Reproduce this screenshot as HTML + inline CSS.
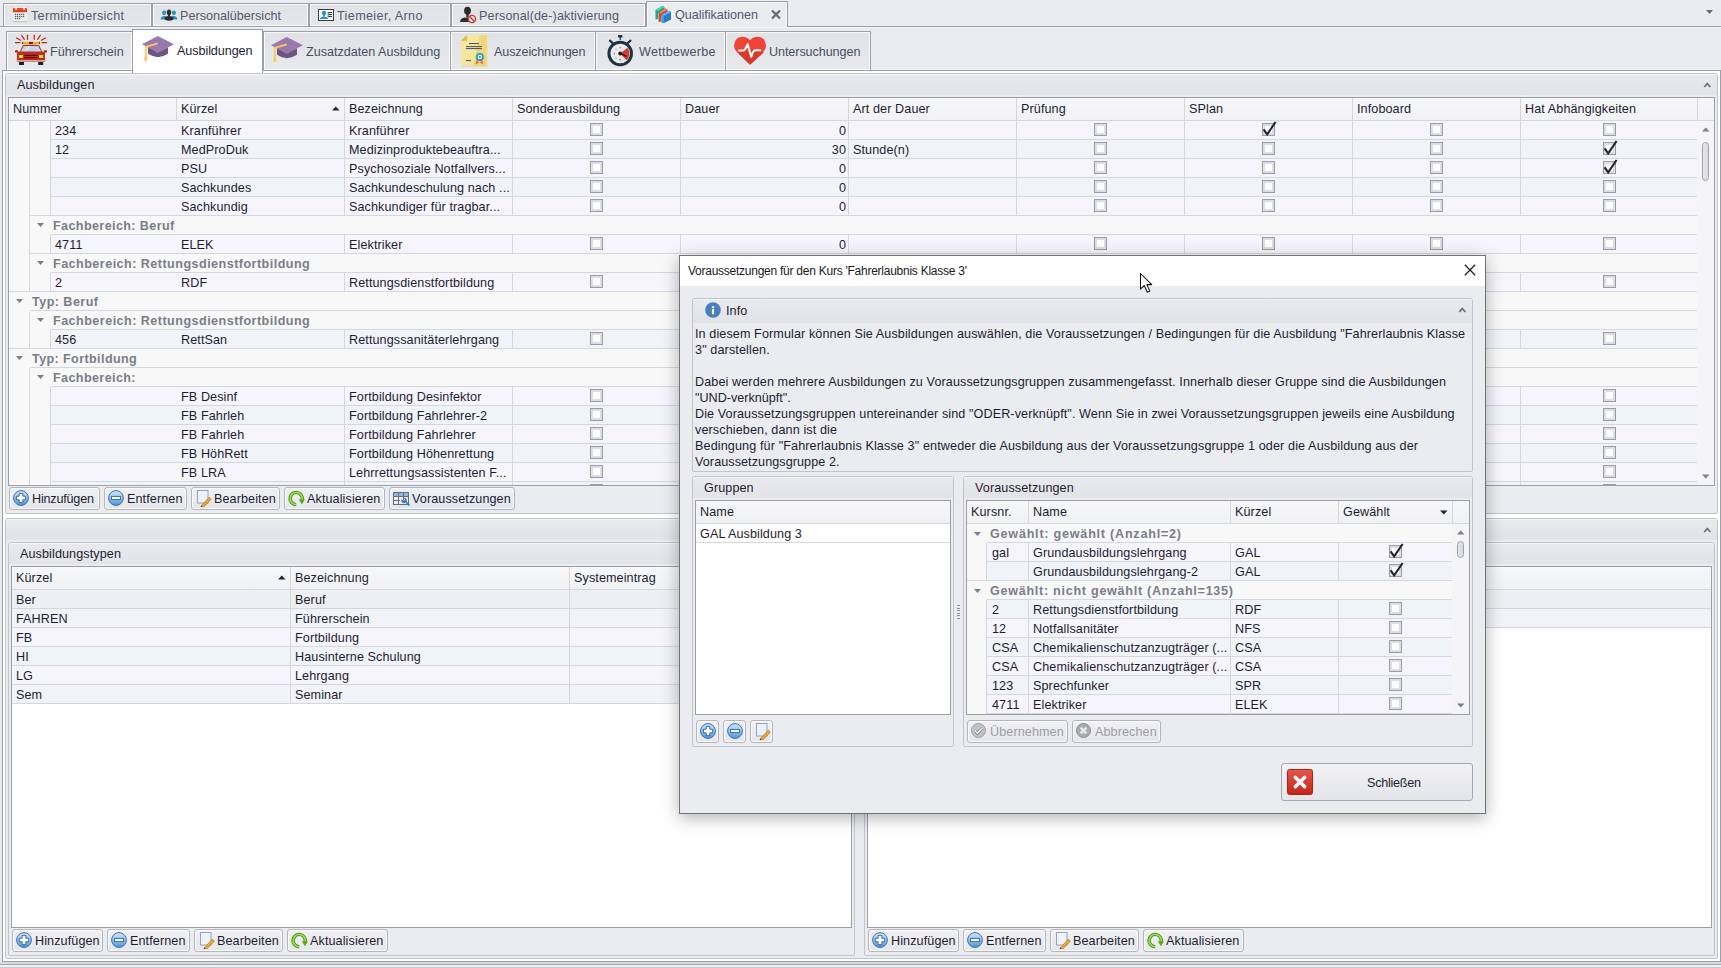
<!DOCTYPE html>
<html><head><meta charset="utf-8"><style>
html,body{margin:0;padding:0;width:1721px;height:968px;overflow:hidden;background:#ebecef;}
body{font-family:"Liberation Sans",sans-serif;position:relative;}
body>div{position:absolute;}
.t{position:absolute;white-space:nowrap;line-height:1;font-family:"Liberation Sans",sans-serif;}
</style></head><body>
<div style="left:0px;top:26px;width:1721px;height:1px;background:#9c9ea9"></div>
<div style="left:0px;top:27px;width:1721px;height:1px;background:#f5f5f7"></div>
<div style="left:3px;top:3px;width:149px;height:24px;background:linear-gradient(#e1e2e6,#e6e7eb);border:1px solid #9c9ea9;box-sizing:border-box;box-shadow:inset 0 0 0 1px rgba(255,255,255,0.85)"></div>
<div style="left:152px;top:3px;width:157px;height:24px;background:linear-gradient(#e1e2e6,#e6e7eb);border:1px solid #9c9ea9;box-sizing:border-box;box-shadow:inset 0 0 0 1px rgba(255,255,255,0.85)"></div>
<div style="left:309px;top:3px;width:142px;height:24px;background:linear-gradient(#e1e2e6,#e6e7eb);border:1px solid #9c9ea9;box-sizing:border-box;box-shadow:inset 0 0 0 1px rgba(255,255,255,0.85)"></div>
<div style="left:451px;top:3px;width:195px;height:24px;background:linear-gradient(#e1e2e6,#e6e7eb);border:1px solid #9c9ea9;box-sizing:border-box;box-shadow:inset 0 0 0 1px rgba(255,255,255,0.85)"></div>
<div style="left:646px;top:1px;width:142px;height:26px;background:#ebecef;border:1px solid #9c9ea9;border-bottom:none;box-sizing:border-box;box-shadow:inset 1px 1px 0 #f7f7f9,inset -1px 0 0 #f7f7f9"></div>
<div class="t" style="left:31px;top:10px;font-size:12.6px;color:#56576f;letter-spacing:0.294px;">Terminübersicht</div>
<div class="t" style="left:180px;top:10px;font-size:12.6px;color:#56576f;letter-spacing:0.012px;">Personalübersicht</div>
<div class="t" style="left:337px;top:10px;font-size:12.6px;color:#56576f;letter-spacing:0.367px;">Tiemeier, Arno</div>
<div class="t" style="left:479px;top:10px;font-size:12.6px;color:#56576f;letter-spacing:0.122px;">Personal(de-)aktivierung</div>
<div class="t" style="left:675px;top:9px;font-size:12.6px;color:#56576f;letter-spacing:-0.022px;">Qualifikationen</div>
<svg style="position:absolute;left:13px;top:7px;" width="14" height="16" viewBox="0 0 14 16"><defs><linearGradient id="cal" x1="0" y1="0" x2="0" y2="1"><stop offset="0" stop-color="#ff4a1c"/><stop offset="1" stop-color="#d8391a"/></linearGradient></defs><rect x="0" y="5" width="14" height="9.5" fill="#efefef"/><rect x="0" y="14" width="14" height="1.2" fill="#c6c6c6"/><rect x="0" y="1" width="14" height="4.2" rx="0.6" fill="url(#cal)"/><rect x="2.3" y="0" width="1.7" height="2.8" fill="#fff"/><rect x="10.2" y="0" width="1.7" height="2.8" fill="#fff"/><rect x="1.9" y="6.80" width="1.3" height="1.3" fill="#5f5f5f"/><rect x="1.9" y="8.85" width="1.3" height="1.3" fill="#5f5f5f"/><rect x="1.9" y="10.90" width="1.3" height="1.3" fill="#5f5f5f"/><rect x="3.9" y="6.80" width="1.3" height="1.3" fill="#5f5f5f"/><rect x="3.9" y="8.85" width="1.3" height="1.3" fill="#5f5f5f"/><rect x="3.9" y="10.90" width="1.3" height="1.3" fill="#5f5f5f"/><rect x="5.9" y="6.80" width="1.3" height="1.3" fill="#5f5f5f"/><rect x="5.9" y="8.85" width="1.3" height="1.3" fill="#5f5f5f"/><rect x="5.9" y="10.90" width="1.3" height="1.3" fill="#5f5f5f"/><rect x="7.9" y="6.80" width="1.3" height="1.3" fill="#5f5f5f"/><rect x="7.9" y="8.85" width="1.3" height="1.3" fill="#5f5f5f"/><rect x="9.9" y="6.80" width="1.3" height="1.3" fill="#5f5f5f"/><rect x="9.9" y="8.85" width="1.3" height="1.3" fill="#5f5f5f"/></svg>
<svg style="position:absolute;left:160px;top:9px;" width="18" height="12" viewBox="0 0 18 12"><ellipse cx="4.1" cy="3.8" rx="2" ry="2.4" fill="#2a92c0"/><path d="M0.6 10.5 Q0.8 7 4.3 7 L6 7.6 V10.5Z" fill="#2a92c0"/><ellipse cx="13.9" cy="3.8" rx="2" ry="2.4" fill="#2a92c0"/><path d="M17.4 10.5 Q17.2 7 13.7 7 L12 7.6 V10.5Z" fill="#2a92c0"/><ellipse cx="9" cy="3.4" rx="2.2" ry="2.8" fill="#2d2d2d"/><rect x="8" y="5.5" width="2" height="2" fill="#2d2d2d"/><ellipse cx="9" cy="9.3" rx="4.5" ry="2.4" fill="#2d2d2d"/></svg>
<svg style="position:absolute;left:318px;top:9px;" width="16" height="12" viewBox="0 0 16 12"><rect x="0.5" y="0.5" width="15" height="11" fill="#fbfbfb" stroke="#3a3a3a" stroke-width="1"/><ellipse cx="6" cy="4.1" rx="2.1" ry="2.3" fill="#2a92c0"/><rect x="5.2" y="6" width="1.6" height="1.5" fill="#2a92c0"/><path d="M1.8 10 Q2.2 7.4 6 7.4 Q9.8 7.4 10.2 10Z" fill="#2a92c0"/><rect x="9.8" y="3" width="4.2" height="1.1" fill="#3a3a3a"/><rect x="9.8" y="5" width="4.2" height="1.1" fill="#3a3a3a"/><rect x="9.8" y="7" width="4.2" height="1.1" fill="#3a3a3a"/><rect x="9.8" y="3" width="0.9" height="5.1" fill="#2a92c0"/></svg>
<svg style="position:absolute;left:459px;top:6px;" width="18" height="18" viewBox="0 0 18 18"><ellipse cx="8.5" cy="4.7" rx="3.4" ry="3.9" fill="#2d2d2d"/><rect x="7.3" y="8" width="2.4" height="3" fill="#2d2d2d"/><path d="M1 16 Q1.2 12 6 11.5 H11 L12 16Z" fill="#2d2d2d"/><circle cx="13" cy="13" r="3.6" fill="#e4eef6" stroke="#d23a2a" stroke-width="1.4"/><path d="M10.6 10.6 L15.4 15.4" stroke="#d23a2a" stroke-width="1.4"/></svg>
<svg style="position:absolute;left:655px;top:5px;" width="17" height="18" viewBox="0 0 17 18"><path d="M0.5 5 L7 1 L9.5 2 V4.5 L3 8.5 V14 L0.5 14.5Z" fill="#15ad88"/><path d="M0.5 5 L7 1 L9.5 2 L3 6Z" fill="#4ed3b0"/><path d="M3.5 7.5 L10 3.5 L12.5 4.5 V7 L6 11 V16.5 L3.5 17Z" fill="#e5412e"/><path d="M3.5 7.5 L10 3.5 L12.5 4.5 L6 8.5Z" fill="#f07a66"/><path d="M6.5 10 L13.5 6 L16 7 V14.5 L9 18 L6.5 17.5Z" fill="#2a7cc0"/><path d="M6.5 10 L13.5 6 L16 7 L9 11Z" fill="#5bb6f5"/><path d="M6.5 10 L9 11 V18 L6.5 17.5Z" fill="#36a3ee"/></svg>
<svg style="position:absolute;left:770px;top:9px;" width="12" height="11" viewBox="0 0 12 11"><path d="M2 1.5 L10 9.5 M10 1.5 L2 9.5" stroke="#6b6c78" stroke-width="2.4"/></svg>
<svg style="position:absolute;left:1706px;top:10px;" width="8" height="5" viewBox="0 0 8 5"><path d="M0 0 H7 L3.5 4Z" fill="#6b6c78"/></svg>
<div style="left:6px;top:31px;width:127px;height:40px;background:linear-gradient(#e1e2e6,#e8e9ed);border:1px solid #9c9ea9;box-sizing:border-box;box-shadow:inset 0 0 0 1px rgba(255,255,255,0.8)"></div>
<div style="left:263px;top:31px;width:188px;height:40px;background:linear-gradient(#e1e2e6,#e8e9ed);border:1px solid #9c9ea9;box-sizing:border-box;box-shadow:inset 0 0 0 1px rgba(255,255,255,0.8)"></div>
<div style="left:450px;top:31px;width:146px;height:40px;background:linear-gradient(#e1e2e6,#e8e9ed);border:1px solid #9c9ea9;box-sizing:border-box;box-shadow:inset 0 0 0 1px rgba(255,255,255,0.8)"></div>
<div style="left:595px;top:31px;width:131px;height:40px;background:linear-gradient(#e1e2e6,#e8e9ed);border:1px solid #9c9ea9;box-sizing:border-box;box-shadow:inset 0 0 0 1px rgba(255,255,255,0.8)"></div>
<div style="left:725px;top:31px;width:146px;height:40px;background:linear-gradient(#e1e2e6,#e8e9ed);border:1px solid #9c9ea9;box-sizing:border-box;box-shadow:inset 0 0 0 1px rgba(255,255,255,0.8)"></div>
<div style="left:2px;top:70px;width:1719px;height:892px;border:1px solid #9c9ea9;box-sizing:border-box;background:#fff"></div>
<div style="left:132px;top:29px;width:131px;height:44px;background:#fff;border:1px solid #9c9ea9;border-bottom:none;box-sizing:border-box;"></div>
<div class="t" style="left:50px;top:46px;font-size:12.6px;color:#4b4c64;letter-spacing:0.018px;">Führerschein</div>
<div class="t" style="left:177px;top:45px;font-size:12.6px;color:#1e1d33;letter-spacing:-0.075px;">Ausbildungen</div>
<div class="t" style="left:306px;top:46px;font-size:12.6px;color:#4b4c64;letter-spacing:-0.009px;">Zusatzdaten Ausbildung</div>
<div class="t" style="left:494px;top:46px;font-size:12.6px;color:#4b4c64;letter-spacing:-0.125px;">Auszeichnungen</div>
<div class="t" style="left:639px;top:46px;font-size:12.6px;color:#4b4c64;letter-spacing:0.262px;">Wettbewerbe</div>
<div class="t" style="left:769px;top:46px;font-size:12.6px;color:#4b4c64;letter-spacing:-0.079px;">Untersuchungen</div>
<svg style="position:absolute;left:141px;top:35px;" width="34" height="27" viewBox="0 0 34 27"><path d="M1 9.2 L16.8 1 L33 9.2 L16.8 17.6Z" fill="#9a7aae"/><path d="M7 12.3 V18.8 Q16.8 25.5 27 18.8 V12.3 L16.8 17.6Z" fill="#6d5582"/><path d="M16.8 8.3 L4.8 11.8 V23.5" stroke="#fcc85b" stroke-width="1.9" fill="none" stroke-linejoin="round"/><rect x="3.3" y="21.5" width="3" height="4.5" rx="1.2" fill="#fcc85b"/></svg>
<svg style="position:absolute;left:270px;top:36px;" width="34" height="27" viewBox="0 0 34 27"><path d="M1 9.2 L16.8 1 L33 9.2 L16.8 17.6Z" fill="#9a7aae"/><path d="M7 12.3 V18.8 Q16.8 25.5 27 18.8 V12.3 L16.8 17.6Z" fill="#6d5582"/><path d="M16.8 8.3 L4.8 11.8 V23.5" stroke="#fcc85b" stroke-width="1.9" fill="none" stroke-linejoin="round"/><rect x="3.3" y="21.5" width="3" height="4.5" rx="1.2" fill="#fcc85b"/></svg>
<svg style="position:absolute;left:12px;top:32px;" width="38" height="36" viewBox="0 0 38 36"><g stroke="#b8281a" stroke-width="1.2" stroke-linecap="round"><path d="M15.5 3.3 V7.3"/><path d="M22.3 3.3 V7.3"/><path d="M9.7 3.3 L12.3 7.3"/><path d="M28.3 3.3 L25.7 7.3"/><path d="M4.6 6 L8.6 8.2"/><path d="M33.4 6 L29.4 8.2"/><path d="M3.4 10.6 H8"/><path d="M34.6 10.6 H30"/></g><rect x="10" y="9.9" width="18" height="2.1" fill="#e3b60c"/><rect x="17.1" y="9.9" width="3.8" height="2.1" fill="#8c0c08"/><rect x="10" y="9.9" width="0.9" height="2.1" fill="#8c0c08"/><rect x="27.1" y="9.9" width="0.9" height="2.1" fill="#8c0c08"/><path d="M7.5 20.5 L10.6 13.8 Q11.2 12.7 12.8 12.7 H25.2 Q26.8 12.7 27.4 13.8 L30.5 20.5Z" fill="#b72a12"/><path d="M8.6 19.9 L11.6 13.9 H26.4 L29.4 19.9Z" fill="#c4d4ee"/><path d="M12 19.9 L16.5 13.9 H18 L13.5 19.9Z" fill="#e2ecfa"/><path d="M5 21 Q5.5 19.5 8 19.5 H30 Q32.5 19.5 33 21 V29.7 H5Z" fill="#bf2d12"/><rect x="3" y="18.2" width="3.2" height="2.4" rx="0.8" fill="#a8200e"/><rect x="31.8" y="18.2" width="3.2" height="2.4" rx="0.8" fill="#a8200e"/><rect x="6.9" y="23" width="4.1" height="3" fill="#ffd21f"/><rect x="27" y="23" width="4.1" height="3" fill="#ffd21f"/><rect x="7.8" y="23.8" width="2" height="1.2" fill="#fff6b0"/><rect x="27.9" y="23.8" width="2" height="1.2" fill="#fff6b0"/><rect x="12.2" y="22.9" width="13.6" height="1.1" fill="#4e0804"/><rect x="12.2" y="25.1" width="13.6" height="1.1" fill="#4e0804"/><rect x="4.2" y="28.2" width="29.6" height="1.2" fill="#c9ccd2"/><rect x="7" y="30" width="5" height="3" fill="#222"/><rect x="26.2" y="30" width="5" height="3" fill="#222"/></svg>
<svg style="position:absolute;left:461px;top:35px;" width="28" height="32" viewBox="0 0 28 32"><path d="M0 5.7 L5.8 0 H26.2 V30.8 H0Z" fill="#f5e89c"/><path d="M19 0 H26.2 V30.8 H12 Z" fill="#f0d878"/><path d="M0 5.7 L5.8 0 V5.7Z" fill="#e3b440"/><rect x="1" y="30.8" width="25.6" height="0.8" fill="#c8c0a0" opacity="0.6"/><rect x="8" y="8" width="10" height="1.1" fill="#4a5a78"/><rect x="5" y="11" width="16" height="1.1" fill="#4a5a78"/><rect x="5" y="13" width="16" height="1.1" fill="#4a5a78"/><rect x="5" y="25" width="5" height="1.1" fill="#4a5a78"/><path d="M16.7 24.5 L15.6 28 L17.6 27.3 M20.3 24.5 L21.4 28 L19.4 27.3" stroke="#f07030" stroke-width="1.5" fill="none"/><circle cx="18.9" cy="21.9" r="4" fill="#2a9bc0"/><circle cx="18.9" cy="21.9" r="2.2" fill="#fff"/><circle cx="18.9" cy="21.9" r="1.1" fill="#2a9bc0"/></svg>
<svg style="position:absolute;left:606px;top:34px;" width="28" height="33" viewBox="0 0 28 33"><rect x="12" y="1" width="4.4" height="2.6" rx="0.5" fill="#1f3346"/><rect x="13.6" y="3" width="1.2" height="3" fill="#1f3346"/><path d="M4 6.6 L6.8 9.3 M24.4 6.6 L21.6 9.3" stroke="#1f3346" stroke-width="2.2" stroke-linecap="round"/><circle cx="14.2" cy="19.5" r="11.3" fill="#e9edef" stroke="#1f3346" stroke-width="3"/><path d="M14.2 19.5 L13.2 28.5 A9 9 0 0 0 22 15Z" fill="#dfe3e6" opacity="0.8"/><path d="M14.2 19.5 L21.5 13.8 A9.3 9.3 0 0 1 20.5 26.3Z" fill="#d9392a"/><rect x="13.5" y="13" width="1.4" height="1.4" fill="#ee6a5a"/><rect x="7.6" y="19" width="1.4" height="1.4" fill="#ee6a5a"/><rect x="13.5" y="25" width="1.4" height="1.4" fill="#d96050"/><rect x="9.4" y="14.6" width="1.3" height="1.3" fill="#8fa6c4"/><rect x="9.4" y="23.4" width="1.3" height="1.3" fill="#8fa6c4"/><path d="M14.2 19.5 L20.5 22.3" stroke="#1a1a1a" stroke-width="1.3"/><circle cx="14.2" cy="19.5" r="1.9" fill="#1a1a1a"/></svg>
<svg style="position:absolute;left:733px;top:36px;" width="34" height="30" viewBox="0 0 34 30"><defs><linearGradient id="hg" x1="0" y1="0" x2="1" y2="1"><stop offset="0.5" stop-color="#ef4338"/><stop offset="0.5" stop-color="#d5372c"/></linearGradient></defs><path d="M17 28.8 L3.8 16 Q0.5 12.5 1.2 8.5 Q2.2 1 9.5 0.8 Q14.2 0.8 17 4.3 Q19.8 0.8 24.5 0.8 Q31.8 1 32.8 8.5 Q33.5 12.5 30.2 16Z" fill="#ef4338"/><path d="M17 28.8 L6 18 L12.5 12 L17 18.5 L19.5 13.5 L31 16.5Z" fill="#d5372c" opacity="0.85"/><path d="M6 14.5 H10.2 Q11.6 14.5 12.8 12 L14.7 8.2 L18.2 20.8 L20 16 Q21 14.3 23 14.3 H27.3" stroke="#fff" stroke-width="2" fill="none" stroke-linejoin="round" stroke-linecap="round"/></svg>
<div style="left:5px;top:73px;width:1713px;height:441px;border:1px solid #c3c4cb;border-radius:3px 3px 2px 2px;box-sizing:border-box;background:#ebecef"></div>
<div style="left:6px;top:74px;width:1711px;height:21px;background:linear-gradient(#e9eaee,#e2e3e7);border-radius:2px 2px 0 0;box-shadow:inset 0 1px 0 rgba(255,255,255,0.55)"></div>
<div class="t" style="left:17px;top:79px;font-size:12.6px;color:#1e1d33;letter-spacing:0.1px;">Ausbildungen</div>
<svg style="position:absolute;left:1703px;top:82px;" width="9" height="6" viewBox="0 0 9 6"><path d="M1.2 5 L4.3 1.6 L7.4 5" stroke="#6f707c" stroke-width="1.7" fill="none"/></svg>
<div style="left:8px;top:97px;width:1707px;height:389px;border:1px solid #9c9ea9;box-sizing:border-box;background:#fff"></div>
<div style="left:9px;top:98px;width:1705px;height:22px;background:linear-gradient(#f7f7f9,#f1f2f4)"></div>
<div style="left:9px;top:120px;width:1705px;height:1px;background:#d6d7dc"></div>
<div style="left:176px;top:98px;width:1px;height:22px;background:#d6d7dc"></div>
<div style="left:344px;top:98px;width:1px;height:22px;background:#d6d7dc"></div>
<div style="left:512px;top:98px;width:1px;height:22px;background:#d6d7dc"></div>
<div style="left:680px;top:98px;width:1px;height:22px;background:#d6d7dc"></div>
<div style="left:848px;top:98px;width:1px;height:22px;background:#d6d7dc"></div>
<div style="left:1016px;top:98px;width:1px;height:22px;background:#d6d7dc"></div>
<div style="left:1184px;top:98px;width:1px;height:22px;background:#d6d7dc"></div>
<div style="left:1352px;top:98px;width:1px;height:22px;background:#d6d7dc"></div>
<div style="left:1520px;top:98px;width:1px;height:22px;background:#d6d7dc"></div>
<div style="left:1697px;top:98px;width:1px;height:22px;background:#d6d7dc"></div>
<div class="t" style="left:13px;top:103px;font-size:12.6px;color:#1e1d33;letter-spacing:0.1px;">Nummer</div>
<div class="t" style="left:181px;top:103px;font-size:12.6px;color:#1e1d33;letter-spacing:0.1px;">Kürzel</div>
<div class="t" style="left:349px;top:103px;font-size:12.6px;color:#1e1d33;letter-spacing:0.1px;">Bezeichnung</div>
<div class="t" style="left:517px;top:103px;font-size:12.6px;color:#1e1d33;letter-spacing:0.1px;">Sonderausbildung</div>
<div class="t" style="left:685px;top:103px;font-size:12.6px;color:#1e1d33;letter-spacing:0.1px;">Dauer</div>
<div class="t" style="left:853px;top:103px;font-size:12.6px;color:#1e1d33;letter-spacing:0.1px;">Art der Dauer</div>
<div class="t" style="left:1021px;top:103px;font-size:12.6px;color:#1e1d33;letter-spacing:0.1px;">Prüfung</div>
<div class="t" style="left:1189px;top:103px;font-size:12.6px;color:#1e1d33;letter-spacing:0.1px;">SPlan</div>
<div class="t" style="left:1357px;top:103px;font-size:12.6px;color:#1e1d33;letter-spacing:0.1px;">Infoboard</div>
<div class="t" style="left:1525px;top:103px;font-size:12.6px;color:#1e1d33;letter-spacing:0.1px;">Hat Abhängigkeiten</div>
<svg style="position:absolute;left:332px;top:106px;" width="8" height="5" viewBox="0 0 8 5"><path d="M0 4.5 L3.75 0.5 L7.5 4.5Z" fill="#22223a"/></svg>
<div style="left:1697px;top:121px;width:17px;height:364px;background:#f5f5f7"></div>
<svg style="position:absolute;left:1702px;top:127px;" width="8" height="5" viewBox="0 0 8 5"><path d="M0 4.5 L3.75 0.5 L7.5 4.5Z" fill="#7d7e8a"/></svg>
<div style="left:1702px;top:142px;width:7px;height:39px;border:1px solid #9fa0ab;border-radius:4px;box-sizing:border-box;background:linear-gradient(90deg,#e6e7ec,#d8d9df)"></div>
<svg style="position:absolute;left:1702px;top:474px;" width="8" height="5" viewBox="0 0 8 5"><path d="M0 0.5 H7.5 L3.75 4.5Z" fill="#7d7e8a"/></svg>
<div style="left:9px;top:121px;width:42px;height:364px;background:#f8f8f9"></div>
<div style="left:51px;top:121px;width:1646px;height:18px;background:#f6f4fc"></div>
<div style="left:344px;top:121px;width:1px;height:18px;background:#d6d7dc"></div>
<div style="left:512px;top:121px;width:1px;height:18px;background:#d6d7dc"></div>
<div style="left:680px;top:121px;width:1px;height:18px;background:#d6d7dc"></div>
<div style="left:848px;top:121px;width:1px;height:18px;background:#d6d7dc"></div>
<div style="left:1016px;top:121px;width:1px;height:18px;background:#d6d7dc"></div>
<div style="left:1184px;top:121px;width:1px;height:18px;background:#d6d7dc"></div>
<div style="left:1352px;top:121px;width:1px;height:18px;background:#d6d7dc"></div>
<div style="left:1520px;top:121px;width:1px;height:18px;background:#d6d7dc"></div>
<div class="t" style="left:55px;top:125px;font-size:12.6px;color:#1e1d33;letter-spacing:0.1px;">234</div>
<div class="t" style="left:181px;top:125px;font-size:12.6px;color:#1e1d33;letter-spacing:0.1px;">Kranführer</div>
<div class="t" style="left:349px;top:125px;font-size:12.6px;color:#1e1d33;letter-spacing:0.1px;">Kranführer</div>
<div style="left:590px;top:123px;width:13px;height:13px;border:1px solid #9b9ca7;box-sizing:border-box;background:#fff;box-shadow:inset 0 0 0 2px #dddee3"></div>
<div class="t" style="right:875px;top:125px;font-size:12.6px;color:#1e1d33;letter-spacing:0.1px;">0</div>
<div style="left:1094px;top:123px;width:13px;height:13px;border:1px solid #9b9ca7;box-sizing:border-box;background:#fff;box-shadow:inset 0 0 0 2px #dddee3"></div>
<div style="left:1262px;top:123px;width:13px;height:13px;border:1px solid #9b9ca7;box-sizing:border-box;background:#fff;box-shadow:inset 0 0 0 2px #dddee3"></div>
<svg style="position:absolute;left:1262px;top:121px;" width="15" height="15" viewBox="0 0 15 15"><path d="M1.6 8.3 L5.2 13.3 L13.6 1" stroke="#23223a" stroke-width="2.1" fill="none"/></svg>
<div style="left:1430px;top:123px;width:13px;height:13px;border:1px solid #9b9ca7;box-sizing:border-box;background:#fff;box-shadow:inset 0 0 0 2px #dddee3"></div>
<div style="left:1603px;top:123px;width:13px;height:13px;border:1px solid #9b9ca7;box-sizing:border-box;background:#fff;box-shadow:inset 0 0 0 2px #dddee3"></div>
<div style="left:51px;top:139px;width:1646px;height:1px;background:#d6d7dc"></div>
<div style="left:51px;top:140px;width:1646px;height:18px;background:#f0f3f8"></div>
<div style="left:344px;top:140px;width:1px;height:18px;background:#d6d7dc"></div>
<div style="left:512px;top:140px;width:1px;height:18px;background:#d6d7dc"></div>
<div style="left:680px;top:140px;width:1px;height:18px;background:#d6d7dc"></div>
<div style="left:848px;top:140px;width:1px;height:18px;background:#d6d7dc"></div>
<div style="left:1016px;top:140px;width:1px;height:18px;background:#d6d7dc"></div>
<div style="left:1184px;top:140px;width:1px;height:18px;background:#d6d7dc"></div>
<div style="left:1352px;top:140px;width:1px;height:18px;background:#d6d7dc"></div>
<div style="left:1520px;top:140px;width:1px;height:18px;background:#d6d7dc"></div>
<div class="t" style="left:55px;top:144px;font-size:12.6px;color:#1e1d33;letter-spacing:0.1px;">12</div>
<div class="t" style="left:181px;top:144px;font-size:12.6px;color:#1e1d33;letter-spacing:0.1px;">MedProDuk</div>
<div class="t" style="left:349px;top:144px;font-size:12.6px;color:#1e1d33;letter-spacing:0.1px;">Medizinproduktebeauftra...</div>
<div style="left:590px;top:142px;width:13px;height:13px;border:1px solid #9b9ca7;box-sizing:border-box;background:#fff;box-shadow:inset 0 0 0 2px #dddee3"></div>
<div class="t" style="right:875px;top:144px;font-size:12.6px;color:#1e1d33;letter-spacing:0.1px;">30</div>
<div class="t" style="left:853px;top:144px;font-size:12.6px;color:#1e1d33;letter-spacing:0.1px;">Stunde(n)</div>
<div style="left:1094px;top:142px;width:13px;height:13px;border:1px solid #9b9ca7;box-sizing:border-box;background:#fff;box-shadow:inset 0 0 0 2px #dddee3"></div>
<div style="left:1262px;top:142px;width:13px;height:13px;border:1px solid #9b9ca7;box-sizing:border-box;background:#fff;box-shadow:inset 0 0 0 2px #dddee3"></div>
<div style="left:1430px;top:142px;width:13px;height:13px;border:1px solid #9b9ca7;box-sizing:border-box;background:#fff;box-shadow:inset 0 0 0 2px #dddee3"></div>
<div style="left:1603px;top:142px;width:13px;height:13px;border:1px solid #9b9ca7;box-sizing:border-box;background:#fff;box-shadow:inset 0 0 0 2px #dddee3"></div>
<svg style="position:absolute;left:1603px;top:140px;" width="15" height="15" viewBox="0 0 15 15"><path d="M1.6 8.3 L5.2 13.3 L13.6 1" stroke="#23223a" stroke-width="2.1" fill="none"/></svg>
<div style="left:51px;top:158px;width:1646px;height:1px;background:#d6d7dc"></div>
<div style="left:51px;top:159px;width:1646px;height:18px;background:#f6f4fc"></div>
<div style="left:344px;top:159px;width:1px;height:18px;background:#d6d7dc"></div>
<div style="left:512px;top:159px;width:1px;height:18px;background:#d6d7dc"></div>
<div style="left:680px;top:159px;width:1px;height:18px;background:#d6d7dc"></div>
<div style="left:848px;top:159px;width:1px;height:18px;background:#d6d7dc"></div>
<div style="left:1016px;top:159px;width:1px;height:18px;background:#d6d7dc"></div>
<div style="left:1184px;top:159px;width:1px;height:18px;background:#d6d7dc"></div>
<div style="left:1352px;top:159px;width:1px;height:18px;background:#d6d7dc"></div>
<div style="left:1520px;top:159px;width:1px;height:18px;background:#d6d7dc"></div>
<div class="t" style="left:181px;top:163px;font-size:12.6px;color:#1e1d33;letter-spacing:0.1px;">PSU</div>
<div class="t" style="left:349px;top:163px;font-size:12.6px;color:#1e1d33;letter-spacing:0.1px;">Psychosoziale Notfallvers...</div>
<div style="left:590px;top:161px;width:13px;height:13px;border:1px solid #9b9ca7;box-sizing:border-box;background:#fff;box-shadow:inset 0 0 0 2px #dddee3"></div>
<div class="t" style="right:875px;top:163px;font-size:12.6px;color:#1e1d33;letter-spacing:0.1px;">0</div>
<div style="left:1094px;top:161px;width:13px;height:13px;border:1px solid #9b9ca7;box-sizing:border-box;background:#fff;box-shadow:inset 0 0 0 2px #dddee3"></div>
<div style="left:1262px;top:161px;width:13px;height:13px;border:1px solid #9b9ca7;box-sizing:border-box;background:#fff;box-shadow:inset 0 0 0 2px #dddee3"></div>
<div style="left:1430px;top:161px;width:13px;height:13px;border:1px solid #9b9ca7;box-sizing:border-box;background:#fff;box-shadow:inset 0 0 0 2px #dddee3"></div>
<div style="left:1603px;top:161px;width:13px;height:13px;border:1px solid #9b9ca7;box-sizing:border-box;background:#fff;box-shadow:inset 0 0 0 2px #dddee3"></div>
<svg style="position:absolute;left:1603px;top:159px;" width="15" height="15" viewBox="0 0 15 15"><path d="M1.6 8.3 L5.2 13.3 L13.6 1" stroke="#23223a" stroke-width="2.1" fill="none"/></svg>
<div style="left:51px;top:177px;width:1646px;height:1px;background:#d6d7dc"></div>
<div style="left:51px;top:178px;width:1646px;height:18px;background:#f0f3f8"></div>
<div style="left:344px;top:178px;width:1px;height:18px;background:#d6d7dc"></div>
<div style="left:512px;top:178px;width:1px;height:18px;background:#d6d7dc"></div>
<div style="left:680px;top:178px;width:1px;height:18px;background:#d6d7dc"></div>
<div style="left:848px;top:178px;width:1px;height:18px;background:#d6d7dc"></div>
<div style="left:1016px;top:178px;width:1px;height:18px;background:#d6d7dc"></div>
<div style="left:1184px;top:178px;width:1px;height:18px;background:#d6d7dc"></div>
<div style="left:1352px;top:178px;width:1px;height:18px;background:#d6d7dc"></div>
<div style="left:1520px;top:178px;width:1px;height:18px;background:#d6d7dc"></div>
<div class="t" style="left:181px;top:182px;font-size:12.6px;color:#1e1d33;letter-spacing:0.1px;">Sachkundes</div>
<div class="t" style="left:349px;top:182px;font-size:12.6px;color:#1e1d33;letter-spacing:0.1px;">Sachkundeschulung nach ...</div>
<div style="left:590px;top:180px;width:13px;height:13px;border:1px solid #9b9ca7;box-sizing:border-box;background:#fff;box-shadow:inset 0 0 0 2px #dddee3"></div>
<div class="t" style="right:875px;top:182px;font-size:12.6px;color:#1e1d33;letter-spacing:0.1px;">0</div>
<div style="left:1094px;top:180px;width:13px;height:13px;border:1px solid #9b9ca7;box-sizing:border-box;background:#fff;box-shadow:inset 0 0 0 2px #dddee3"></div>
<div style="left:1262px;top:180px;width:13px;height:13px;border:1px solid #9b9ca7;box-sizing:border-box;background:#fff;box-shadow:inset 0 0 0 2px #dddee3"></div>
<div style="left:1430px;top:180px;width:13px;height:13px;border:1px solid #9b9ca7;box-sizing:border-box;background:#fff;box-shadow:inset 0 0 0 2px #dddee3"></div>
<div style="left:1603px;top:180px;width:13px;height:13px;border:1px solid #9b9ca7;box-sizing:border-box;background:#fff;box-shadow:inset 0 0 0 2px #dddee3"></div>
<div style="left:51px;top:196px;width:1646px;height:1px;background:#d6d7dc"></div>
<div style="left:51px;top:197px;width:1646px;height:18px;background:#f6f4fc"></div>
<div style="left:344px;top:197px;width:1px;height:18px;background:#d6d7dc"></div>
<div style="left:512px;top:197px;width:1px;height:18px;background:#d6d7dc"></div>
<div style="left:680px;top:197px;width:1px;height:18px;background:#d6d7dc"></div>
<div style="left:848px;top:197px;width:1px;height:18px;background:#d6d7dc"></div>
<div style="left:1016px;top:197px;width:1px;height:18px;background:#d6d7dc"></div>
<div style="left:1184px;top:197px;width:1px;height:18px;background:#d6d7dc"></div>
<div style="left:1352px;top:197px;width:1px;height:18px;background:#d6d7dc"></div>
<div style="left:1520px;top:197px;width:1px;height:18px;background:#d6d7dc"></div>
<div class="t" style="left:181px;top:201px;font-size:12.6px;color:#1e1d33;letter-spacing:0.1px;">Sachkundig</div>
<div class="t" style="left:349px;top:201px;font-size:12.6px;color:#1e1d33;letter-spacing:0.1px;">Sachkundiger für tragbar...</div>
<div style="left:590px;top:199px;width:13px;height:13px;border:1px solid #9b9ca7;box-sizing:border-box;background:#fff;box-shadow:inset 0 0 0 2px #dddee3"></div>
<div class="t" style="right:875px;top:201px;font-size:12.6px;color:#1e1d33;letter-spacing:0.1px;">0</div>
<div style="left:1094px;top:199px;width:13px;height:13px;border:1px solid #9b9ca7;box-sizing:border-box;background:#fff;box-shadow:inset 0 0 0 2px #dddee3"></div>
<div style="left:1262px;top:199px;width:13px;height:13px;border:1px solid #9b9ca7;box-sizing:border-box;background:#fff;box-shadow:inset 0 0 0 2px #dddee3"></div>
<div style="left:1430px;top:199px;width:13px;height:13px;border:1px solid #9b9ca7;box-sizing:border-box;background:#fff;box-shadow:inset 0 0 0 2px #dddee3"></div>
<div style="left:1603px;top:199px;width:13px;height:13px;border:1px solid #9b9ca7;box-sizing:border-box;background:#fff;box-shadow:inset 0 0 0 2px #dddee3"></div>
<div style="left:30px;top:215px;width:1667px;height:1px;background:#d6d7dc"></div>
<div style="left:30px;top:216px;width:1667px;height:18px;background:#f8f8f9"></div>
<svg style="position:absolute;left:37px;top:223px;" width="7" height="4" viewBox="0 0 7 4"><path d="M0 0 H7 L3.5 4Z" fill="#7c7d88"/></svg>
<div class="t" style="left:53px;top:220px;font-size:12.6px;color:#7c7d88;font-weight:bold;letter-spacing:0.38px;">Fachbereich: Beruf</div>
<div style="left:51px;top:234px;width:1646px;height:1px;background:#d6d7dc"></div>
<div style="left:51px;top:235px;width:1646px;height:18px;background:#f6f4fc"></div>
<div style="left:344px;top:235px;width:1px;height:18px;background:#d6d7dc"></div>
<div style="left:512px;top:235px;width:1px;height:18px;background:#d6d7dc"></div>
<div style="left:680px;top:235px;width:1px;height:18px;background:#d6d7dc"></div>
<div style="left:848px;top:235px;width:1px;height:18px;background:#d6d7dc"></div>
<div style="left:1016px;top:235px;width:1px;height:18px;background:#d6d7dc"></div>
<div style="left:1184px;top:235px;width:1px;height:18px;background:#d6d7dc"></div>
<div style="left:1352px;top:235px;width:1px;height:18px;background:#d6d7dc"></div>
<div style="left:1520px;top:235px;width:1px;height:18px;background:#d6d7dc"></div>
<div class="t" style="left:55px;top:239px;font-size:12.6px;color:#1e1d33;letter-spacing:0.1px;">4711</div>
<div class="t" style="left:181px;top:239px;font-size:12.6px;color:#1e1d33;letter-spacing:0.1px;">ELEK</div>
<div class="t" style="left:349px;top:239px;font-size:12.6px;color:#1e1d33;letter-spacing:0.1px;">Elektriker</div>
<div style="left:590px;top:237px;width:13px;height:13px;border:1px solid #9b9ca7;box-sizing:border-box;background:#fff;box-shadow:inset 0 0 0 2px #dddee3"></div>
<div class="t" style="right:875px;top:239px;font-size:12.6px;color:#1e1d33;letter-spacing:0.1px;">0</div>
<div style="left:1094px;top:237px;width:13px;height:13px;border:1px solid #9b9ca7;box-sizing:border-box;background:#fff;box-shadow:inset 0 0 0 2px #dddee3"></div>
<div style="left:1262px;top:237px;width:13px;height:13px;border:1px solid #9b9ca7;box-sizing:border-box;background:#fff;box-shadow:inset 0 0 0 2px #dddee3"></div>
<div style="left:1430px;top:237px;width:13px;height:13px;border:1px solid #9b9ca7;box-sizing:border-box;background:#fff;box-shadow:inset 0 0 0 2px #dddee3"></div>
<div style="left:1603px;top:237px;width:13px;height:13px;border:1px solid #9b9ca7;box-sizing:border-box;background:#fff;box-shadow:inset 0 0 0 2px #dddee3"></div>
<div style="left:30px;top:253px;width:1667px;height:1px;background:#d6d7dc"></div>
<div style="left:30px;top:254px;width:1667px;height:18px;background:#f8f8f9"></div>
<svg style="position:absolute;left:37px;top:261px;" width="7" height="4" viewBox="0 0 7 4"><path d="M0 0 H7 L3.5 4Z" fill="#7c7d88"/></svg>
<div class="t" style="left:53px;top:258px;font-size:12.6px;color:#7c7d88;font-weight:bold;letter-spacing:0.454px;">Fachbereich: Rettungsdienstfortbildung</div>
<div style="left:51px;top:272px;width:1646px;height:1px;background:#d6d7dc"></div>
<div style="left:51px;top:273px;width:1646px;height:18px;background:#f6f4fc"></div>
<div style="left:344px;top:273px;width:1px;height:18px;background:#d6d7dc"></div>
<div style="left:512px;top:273px;width:1px;height:18px;background:#d6d7dc"></div>
<div style="left:680px;top:273px;width:1px;height:18px;background:#d6d7dc"></div>
<div style="left:848px;top:273px;width:1px;height:18px;background:#d6d7dc"></div>
<div style="left:1016px;top:273px;width:1px;height:18px;background:#d6d7dc"></div>
<div style="left:1184px;top:273px;width:1px;height:18px;background:#d6d7dc"></div>
<div style="left:1352px;top:273px;width:1px;height:18px;background:#d6d7dc"></div>
<div style="left:1520px;top:273px;width:1px;height:18px;background:#d6d7dc"></div>
<div class="t" style="left:55px;top:277px;font-size:12.6px;color:#1e1d33;letter-spacing:0.1px;">2</div>
<div class="t" style="left:181px;top:277px;font-size:12.6px;color:#1e1d33;letter-spacing:0.1px;">RDF</div>
<div class="t" style="left:349px;top:277px;font-size:12.6px;color:#1e1d33;letter-spacing:0.1px;">Rettungsdienstfortbildung</div>
<div style="left:590px;top:275px;width:13px;height:13px;border:1px solid #9b9ca7;box-sizing:border-box;background:#fff;box-shadow:inset 0 0 0 2px #dddee3"></div>
<div style="left:1094px;top:275px;width:13px;height:13px;border:1px solid #9b9ca7;box-sizing:border-box;background:#fff;box-shadow:inset 0 0 0 2px #dddee3"></div>
<div style="left:1262px;top:275px;width:13px;height:13px;border:1px solid #9b9ca7;box-sizing:border-box;background:#fff;box-shadow:inset 0 0 0 2px #dddee3"></div>
<div style="left:1430px;top:275px;width:13px;height:13px;border:1px solid #9b9ca7;box-sizing:border-box;background:#fff;box-shadow:inset 0 0 0 2px #dddee3"></div>
<div style="left:1603px;top:275px;width:13px;height:13px;border:1px solid #9b9ca7;box-sizing:border-box;background:#fff;box-shadow:inset 0 0 0 2px #dddee3"></div>
<div style="left:9px;top:291px;width:1688px;height:1px;background:#d6d7dc"></div>
<div style="left:9px;top:292px;width:1688px;height:18px;background:#f8f8f9"></div>
<svg style="position:absolute;left:16px;top:299px;" width="7" height="4" viewBox="0 0 7 4"><path d="M0 0 H7 L3.5 4Z" fill="#7c7d88"/></svg>
<div class="t" style="left:32px;top:296px;font-size:12.6px;color:#7c7d88;font-weight:bold;letter-spacing:0.439px;">Typ: Beruf</div>
<div style="left:30px;top:310px;width:1667px;height:1px;background:#d6d7dc"></div>
<div style="left:30px;top:311px;width:1667px;height:18px;background:#f8f8f9"></div>
<svg style="position:absolute;left:37px;top:318px;" width="7" height="4" viewBox="0 0 7 4"><path d="M0 0 H7 L3.5 4Z" fill="#7c7d88"/></svg>
<div class="t" style="left:53px;top:315px;font-size:12.6px;color:#7c7d88;font-weight:bold;letter-spacing:0.454px;">Fachbereich: Rettungsdienstfortbildung</div>
<div style="left:51px;top:329px;width:1646px;height:1px;background:#d6d7dc"></div>
<div style="left:51px;top:330px;width:1646px;height:18px;background:#f0f3f8"></div>
<div style="left:344px;top:330px;width:1px;height:18px;background:#d6d7dc"></div>
<div style="left:512px;top:330px;width:1px;height:18px;background:#d6d7dc"></div>
<div style="left:680px;top:330px;width:1px;height:18px;background:#d6d7dc"></div>
<div style="left:848px;top:330px;width:1px;height:18px;background:#d6d7dc"></div>
<div style="left:1016px;top:330px;width:1px;height:18px;background:#d6d7dc"></div>
<div style="left:1184px;top:330px;width:1px;height:18px;background:#d6d7dc"></div>
<div style="left:1352px;top:330px;width:1px;height:18px;background:#d6d7dc"></div>
<div style="left:1520px;top:330px;width:1px;height:18px;background:#d6d7dc"></div>
<div class="t" style="left:55px;top:334px;font-size:12.6px;color:#1e1d33;letter-spacing:0.1px;">456</div>
<div class="t" style="left:181px;top:334px;font-size:12.6px;color:#1e1d33;letter-spacing:0.1px;">RettSan</div>
<div class="t" style="left:349px;top:334px;font-size:12.6px;color:#1e1d33;letter-spacing:0.1px;">Rettungssanitäterlehrgang</div>
<div style="left:590px;top:332px;width:13px;height:13px;border:1px solid #9b9ca7;box-sizing:border-box;background:#fff;box-shadow:inset 0 0 0 2px #dddee3"></div>
<div style="left:1094px;top:332px;width:13px;height:13px;border:1px solid #9b9ca7;box-sizing:border-box;background:#fff;box-shadow:inset 0 0 0 2px #dddee3"></div>
<div style="left:1262px;top:332px;width:13px;height:13px;border:1px solid #9b9ca7;box-sizing:border-box;background:#fff;box-shadow:inset 0 0 0 2px #dddee3"></div>
<div style="left:1430px;top:332px;width:13px;height:13px;border:1px solid #9b9ca7;box-sizing:border-box;background:#fff;box-shadow:inset 0 0 0 2px #dddee3"></div>
<div style="left:1603px;top:332px;width:13px;height:13px;border:1px solid #9b9ca7;box-sizing:border-box;background:#fff;box-shadow:inset 0 0 0 2px #dddee3"></div>
<div style="left:9px;top:348px;width:1688px;height:1px;background:#d6d7dc"></div>
<div style="left:9px;top:349px;width:1688px;height:18px;background:#f8f8f9"></div>
<svg style="position:absolute;left:16px;top:356px;" width="7" height="4" viewBox="0 0 7 4"><path d="M0 0 H7 L3.5 4Z" fill="#7c7d88"/></svg>
<div class="t" style="left:32px;top:353px;font-size:12.6px;color:#7c7d88;font-weight:bold;letter-spacing:0.38px;">Typ: Fortbildung</div>
<div style="left:30px;top:367px;width:1667px;height:1px;background:#d6d7dc"></div>
<div style="left:30px;top:368px;width:1667px;height:18px;background:#f8f8f9"></div>
<svg style="position:absolute;left:37px;top:375px;" width="7" height="4" viewBox="0 0 7 4"><path d="M0 0 H7 L3.5 4Z" fill="#7c7d88"/></svg>
<div class="t" style="left:53px;top:372px;font-size:12.6px;color:#7c7d88;font-weight:bold;letter-spacing:0.38px;">Fachbereich:</div>
<div style="left:51px;top:386px;width:1646px;height:1px;background:#d6d7dc"></div>
<div style="left:51px;top:387px;width:1646px;height:18px;background:#f6f4fc"></div>
<div style="left:344px;top:387px;width:1px;height:18px;background:#d6d7dc"></div>
<div style="left:512px;top:387px;width:1px;height:18px;background:#d6d7dc"></div>
<div style="left:680px;top:387px;width:1px;height:18px;background:#d6d7dc"></div>
<div style="left:848px;top:387px;width:1px;height:18px;background:#d6d7dc"></div>
<div style="left:1016px;top:387px;width:1px;height:18px;background:#d6d7dc"></div>
<div style="left:1184px;top:387px;width:1px;height:18px;background:#d6d7dc"></div>
<div style="left:1352px;top:387px;width:1px;height:18px;background:#d6d7dc"></div>
<div style="left:1520px;top:387px;width:1px;height:18px;background:#d6d7dc"></div>
<div class="t" style="left:181px;top:391px;font-size:12.6px;color:#1e1d33;letter-spacing:0.1px;">FB Desinf</div>
<div class="t" style="left:349px;top:391px;font-size:12.6px;color:#1e1d33;letter-spacing:0.1px;">Fortbildung Desinfektor</div>
<div style="left:590px;top:389px;width:13px;height:13px;border:1px solid #9b9ca7;box-sizing:border-box;background:#fff;box-shadow:inset 0 0 0 2px #dddee3"></div>
<div style="left:1094px;top:389px;width:13px;height:13px;border:1px solid #9b9ca7;box-sizing:border-box;background:#fff;box-shadow:inset 0 0 0 2px #dddee3"></div>
<div style="left:1262px;top:389px;width:13px;height:13px;border:1px solid #9b9ca7;box-sizing:border-box;background:#fff;box-shadow:inset 0 0 0 2px #dddee3"></div>
<div style="left:1430px;top:389px;width:13px;height:13px;border:1px solid #9b9ca7;box-sizing:border-box;background:#fff;box-shadow:inset 0 0 0 2px #dddee3"></div>
<div style="left:1603px;top:389px;width:13px;height:13px;border:1px solid #9b9ca7;box-sizing:border-box;background:#fff;box-shadow:inset 0 0 0 2px #dddee3"></div>
<div style="left:51px;top:405px;width:1646px;height:1px;background:#d6d7dc"></div>
<div style="left:51px;top:406px;width:1646px;height:18px;background:#f0f3f8"></div>
<div style="left:344px;top:406px;width:1px;height:18px;background:#d6d7dc"></div>
<div style="left:512px;top:406px;width:1px;height:18px;background:#d6d7dc"></div>
<div style="left:680px;top:406px;width:1px;height:18px;background:#d6d7dc"></div>
<div style="left:848px;top:406px;width:1px;height:18px;background:#d6d7dc"></div>
<div style="left:1016px;top:406px;width:1px;height:18px;background:#d6d7dc"></div>
<div style="left:1184px;top:406px;width:1px;height:18px;background:#d6d7dc"></div>
<div style="left:1352px;top:406px;width:1px;height:18px;background:#d6d7dc"></div>
<div style="left:1520px;top:406px;width:1px;height:18px;background:#d6d7dc"></div>
<div class="t" style="left:181px;top:410px;font-size:12.6px;color:#1e1d33;letter-spacing:0.1px;">FB Fahrleh</div>
<div class="t" style="left:349px;top:410px;font-size:12.6px;color:#1e1d33;letter-spacing:0.1px;">Fortbildung Fahrlehrer-2</div>
<div style="left:590px;top:408px;width:13px;height:13px;border:1px solid #9b9ca7;box-sizing:border-box;background:#fff;box-shadow:inset 0 0 0 2px #dddee3"></div>
<div style="left:1094px;top:408px;width:13px;height:13px;border:1px solid #9b9ca7;box-sizing:border-box;background:#fff;box-shadow:inset 0 0 0 2px #dddee3"></div>
<div style="left:1262px;top:408px;width:13px;height:13px;border:1px solid #9b9ca7;box-sizing:border-box;background:#fff;box-shadow:inset 0 0 0 2px #dddee3"></div>
<div style="left:1430px;top:408px;width:13px;height:13px;border:1px solid #9b9ca7;box-sizing:border-box;background:#fff;box-shadow:inset 0 0 0 2px #dddee3"></div>
<div style="left:1603px;top:408px;width:13px;height:13px;border:1px solid #9b9ca7;box-sizing:border-box;background:#fff;box-shadow:inset 0 0 0 2px #dddee3"></div>
<div style="left:51px;top:424px;width:1646px;height:1px;background:#d6d7dc"></div>
<div style="left:51px;top:425px;width:1646px;height:18px;background:#f6f4fc"></div>
<div style="left:344px;top:425px;width:1px;height:18px;background:#d6d7dc"></div>
<div style="left:512px;top:425px;width:1px;height:18px;background:#d6d7dc"></div>
<div style="left:680px;top:425px;width:1px;height:18px;background:#d6d7dc"></div>
<div style="left:848px;top:425px;width:1px;height:18px;background:#d6d7dc"></div>
<div style="left:1016px;top:425px;width:1px;height:18px;background:#d6d7dc"></div>
<div style="left:1184px;top:425px;width:1px;height:18px;background:#d6d7dc"></div>
<div style="left:1352px;top:425px;width:1px;height:18px;background:#d6d7dc"></div>
<div style="left:1520px;top:425px;width:1px;height:18px;background:#d6d7dc"></div>
<div class="t" style="left:181px;top:429px;font-size:12.6px;color:#1e1d33;letter-spacing:0.1px;">FB Fahrleh</div>
<div class="t" style="left:349px;top:429px;font-size:12.6px;color:#1e1d33;letter-spacing:0.1px;">Fortbildung Fahrlehrer</div>
<div style="left:590px;top:427px;width:13px;height:13px;border:1px solid #9b9ca7;box-sizing:border-box;background:#fff;box-shadow:inset 0 0 0 2px #dddee3"></div>
<div style="left:1094px;top:427px;width:13px;height:13px;border:1px solid #9b9ca7;box-sizing:border-box;background:#fff;box-shadow:inset 0 0 0 2px #dddee3"></div>
<div style="left:1262px;top:427px;width:13px;height:13px;border:1px solid #9b9ca7;box-sizing:border-box;background:#fff;box-shadow:inset 0 0 0 2px #dddee3"></div>
<div style="left:1430px;top:427px;width:13px;height:13px;border:1px solid #9b9ca7;box-sizing:border-box;background:#fff;box-shadow:inset 0 0 0 2px #dddee3"></div>
<div style="left:1603px;top:427px;width:13px;height:13px;border:1px solid #9b9ca7;box-sizing:border-box;background:#fff;box-shadow:inset 0 0 0 2px #dddee3"></div>
<div style="left:51px;top:443px;width:1646px;height:1px;background:#d6d7dc"></div>
<div style="left:51px;top:444px;width:1646px;height:18px;background:#f0f3f8"></div>
<div style="left:344px;top:444px;width:1px;height:18px;background:#d6d7dc"></div>
<div style="left:512px;top:444px;width:1px;height:18px;background:#d6d7dc"></div>
<div style="left:680px;top:444px;width:1px;height:18px;background:#d6d7dc"></div>
<div style="left:848px;top:444px;width:1px;height:18px;background:#d6d7dc"></div>
<div style="left:1016px;top:444px;width:1px;height:18px;background:#d6d7dc"></div>
<div style="left:1184px;top:444px;width:1px;height:18px;background:#d6d7dc"></div>
<div style="left:1352px;top:444px;width:1px;height:18px;background:#d6d7dc"></div>
<div style="left:1520px;top:444px;width:1px;height:18px;background:#d6d7dc"></div>
<div class="t" style="left:181px;top:448px;font-size:12.6px;color:#1e1d33;letter-spacing:0.1px;">FB HöhRett</div>
<div class="t" style="left:349px;top:448px;font-size:12.6px;color:#1e1d33;letter-spacing:0.1px;">Fortbildung Höhenrettung</div>
<div style="left:590px;top:446px;width:13px;height:13px;border:1px solid #9b9ca7;box-sizing:border-box;background:#fff;box-shadow:inset 0 0 0 2px #dddee3"></div>
<div style="left:1094px;top:446px;width:13px;height:13px;border:1px solid #9b9ca7;box-sizing:border-box;background:#fff;box-shadow:inset 0 0 0 2px #dddee3"></div>
<div style="left:1262px;top:446px;width:13px;height:13px;border:1px solid #9b9ca7;box-sizing:border-box;background:#fff;box-shadow:inset 0 0 0 2px #dddee3"></div>
<div style="left:1430px;top:446px;width:13px;height:13px;border:1px solid #9b9ca7;box-sizing:border-box;background:#fff;box-shadow:inset 0 0 0 2px #dddee3"></div>
<div style="left:1603px;top:446px;width:13px;height:13px;border:1px solid #9b9ca7;box-sizing:border-box;background:#fff;box-shadow:inset 0 0 0 2px #dddee3"></div>
<div style="left:51px;top:462px;width:1646px;height:1px;background:#d6d7dc"></div>
<div style="left:51px;top:463px;width:1646px;height:18px;background:#f6f4fc"></div>
<div style="left:344px;top:463px;width:1px;height:18px;background:#d6d7dc"></div>
<div style="left:512px;top:463px;width:1px;height:18px;background:#d6d7dc"></div>
<div style="left:680px;top:463px;width:1px;height:18px;background:#d6d7dc"></div>
<div style="left:848px;top:463px;width:1px;height:18px;background:#d6d7dc"></div>
<div style="left:1016px;top:463px;width:1px;height:18px;background:#d6d7dc"></div>
<div style="left:1184px;top:463px;width:1px;height:18px;background:#d6d7dc"></div>
<div style="left:1352px;top:463px;width:1px;height:18px;background:#d6d7dc"></div>
<div style="left:1520px;top:463px;width:1px;height:18px;background:#d6d7dc"></div>
<div class="t" style="left:181px;top:467px;font-size:12.6px;color:#1e1d33;letter-spacing:0.1px;">FB LRA</div>
<div class="t" style="left:349px;top:467px;font-size:12.6px;color:#1e1d33;letter-spacing:0.1px;">Lehrrettungsassistenten F...</div>
<div style="left:590px;top:465px;width:13px;height:13px;border:1px solid #9b9ca7;box-sizing:border-box;background:#fff;box-shadow:inset 0 0 0 2px #dddee3"></div>
<div style="left:1094px;top:465px;width:13px;height:13px;border:1px solid #9b9ca7;box-sizing:border-box;background:#fff;box-shadow:inset 0 0 0 2px #dddee3"></div>
<div style="left:1262px;top:465px;width:13px;height:13px;border:1px solid #9b9ca7;box-sizing:border-box;background:#fff;box-shadow:inset 0 0 0 2px #dddee3"></div>
<div style="left:1430px;top:465px;width:13px;height:13px;border:1px solid #9b9ca7;box-sizing:border-box;background:#fff;box-shadow:inset 0 0 0 2px #dddee3"></div>
<div style="left:1603px;top:465px;width:13px;height:13px;border:1px solid #9b9ca7;box-sizing:border-box;background:#fff;box-shadow:inset 0 0 0 2px #dddee3"></div>
<div style="left:51px;top:481px;width:1646px;height:1px;background:#d6d7dc"></div>
<div style="left:51px;top:482px;width:1646px;height:3px;background:#f0f3f8"></div>
<div style="left:344px;top:482px;width:1px;height:3px;background:#d6d7dc"></div>
<div style="left:512px;top:482px;width:1px;height:3px;background:#d6d7dc"></div>
<div style="left:680px;top:482px;width:1px;height:3px;background:#d6d7dc"></div>
<div style="left:848px;top:482px;width:1px;height:3px;background:#d6d7dc"></div>
<div style="left:1016px;top:482px;width:1px;height:3px;background:#d6d7dc"></div>
<div style="left:1184px;top:482px;width:1px;height:3px;background:#d6d7dc"></div>
<div style="left:1352px;top:482px;width:1px;height:3px;background:#d6d7dc"></div>
<div style="left:1520px;top:482px;width:1px;height:3px;background:#d6d7dc"></div>
<div style="left:590px;top:484px;width:13px;height:1px;border-top:1px solid #9b9ca7;box-sizing:border-box;background:#e4e5ea"></div>
<div style="left:1094px;top:484px;width:13px;height:1px;border-top:1px solid #9b9ca7;box-sizing:border-box;background:#e4e5ea"></div>
<div style="left:1262px;top:484px;width:13px;height:1px;border-top:1px solid #9b9ca7;box-sizing:border-box;background:#e4e5ea"></div>
<div style="left:1430px;top:484px;width:13px;height:1px;border-top:1px solid #9b9ca7;box-sizing:border-box;background:#e4e5ea"></div>
<div style="left:1603px;top:484px;width:13px;height:1px;border-top:1px solid #9b9ca7;box-sizing:border-box;background:#e4e5ea"></div>
<div style="left:29px;top:121px;width:1px;height:19px;background:#d6d7dc"></div>
<div style="left:50px;top:121px;width:1px;height:19px;background:#d6d7dc"></div>
<div style="left:29px;top:140px;width:1px;height:19px;background:#d6d7dc"></div>
<div style="left:50px;top:140px;width:1px;height:19px;background:#d6d7dc"></div>
<div style="left:29px;top:159px;width:1px;height:19px;background:#d6d7dc"></div>
<div style="left:50px;top:159px;width:1px;height:19px;background:#d6d7dc"></div>
<div style="left:29px;top:178px;width:1px;height:19px;background:#d6d7dc"></div>
<div style="left:50px;top:178px;width:1px;height:19px;background:#d6d7dc"></div>
<div style="left:29px;top:197px;width:1px;height:19px;background:#d6d7dc"></div>
<div style="left:50px;top:197px;width:1px;height:19px;background:#d6d7dc"></div>
<div style="left:29px;top:216px;width:1px;height:19px;background:#d6d7dc"></div>
<div style="left:29px;top:235px;width:1px;height:19px;background:#d6d7dc"></div>
<div style="left:50px;top:235px;width:1px;height:19px;background:#d6d7dc"></div>
<div style="left:29px;top:254px;width:1px;height:19px;background:#d6d7dc"></div>
<div style="left:29px;top:273px;width:1px;height:19px;background:#d6d7dc"></div>
<div style="left:50px;top:273px;width:1px;height:19px;background:#d6d7dc"></div>
<div style="left:29px;top:311px;width:1px;height:19px;background:#d6d7dc"></div>
<div style="left:29px;top:330px;width:1px;height:19px;background:#d6d7dc"></div>
<div style="left:50px;top:330px;width:1px;height:19px;background:#d6d7dc"></div>
<div style="left:29px;top:368px;width:1px;height:19px;background:#d6d7dc"></div>
<div style="left:29px;top:387px;width:1px;height:19px;background:#d6d7dc"></div>
<div style="left:50px;top:387px;width:1px;height:19px;background:#d6d7dc"></div>
<div style="left:29px;top:406px;width:1px;height:19px;background:#d6d7dc"></div>
<div style="left:50px;top:406px;width:1px;height:19px;background:#d6d7dc"></div>
<div style="left:29px;top:425px;width:1px;height:19px;background:#d6d7dc"></div>
<div style="left:50px;top:425px;width:1px;height:19px;background:#d6d7dc"></div>
<div style="left:29px;top:444px;width:1px;height:19px;background:#d6d7dc"></div>
<div style="left:50px;top:444px;width:1px;height:19px;background:#d6d7dc"></div>
<div style="left:29px;top:463px;width:1px;height:19px;background:#d6d7dc"></div>
<div style="left:50px;top:463px;width:1px;height:19px;background:#d6d7dc"></div>
<div style="left:29px;top:482px;width:1px;height:3px;background:#d6d7dc"></div>
<div style="left:50px;top:482px;width:1px;height:3px;background:#d6d7dc"></div>
<div style="left:9px;top:487px;width:91px;height:23px;background:linear-gradient(#f1f1f4,#e5e6ea);border:1px solid #b4b5bd;border-radius:3px;box-sizing:border-box;box-shadow:inset 0 0 0 1px rgba(255,255,255,0.75)"></div>
<svg style="position:absolute;left:13px;top:490px;" width="16" height="16" viewBox="0 0 16 16"><defs><linearGradient id="gp" x1="0" y1="0" x2="0" y2="1"><stop offset="0" stop-color="#cfe6fa"/><stop offset="0.55" stop-color="#8cc0ec"/><stop offset="1" stop-color="#4d93d6"/></linearGradient></defs><circle cx="8" cy="8" r="7.4" fill="url(#gp)" stroke="#3b6fb6" stroke-width="1"/><path d="M6.2 3.4 H9.8 V6.2 H12.6 V9.8 H9.8 V12.6 H6.2 V9.8 H3.4 V6.2 H6.2Z" fill="#fff" stroke="#2f5fa5" stroke-width="0.9"/></svg>
<div class="t" style="left:32px;top:493px;font-size:12.6px;color:#1e1d33;letter-spacing:-0.191px;">Hinzufügen</div>
<div style="left:104px;top:487px;width:83px;height:23px;background:linear-gradient(#f1f1f4,#e5e6ea);border:1px solid #b4b5bd;border-radius:3px;box-sizing:border-box;box-shadow:inset 0 0 0 1px rgba(255,255,255,0.75)"></div>
<svg style="position:absolute;left:108px;top:490px;" width="16" height="16" viewBox="0 0 16 16"><circle cx="8" cy="8" r="7.4" fill="url(#gp)" stroke="#3b6fb6" stroke-width="1"/><rect x="3.6" y="6.4" width="8.8" height="3.2" fill="#fff" stroke="#2f5fa5" stroke-width="0.9"/></svg>
<div class="t" style="left:127px;top:493px;font-size:12.6px;color:#1e1d33;letter-spacing:0.1px;">Entfernen</div>
<div style="left:191px;top:487px;width:89px;height:23px;background:linear-gradient(#f1f1f4,#e5e6ea);border:1px solid #b4b5bd;border-radius:3px;box-sizing:border-box;box-shadow:inset 0 0 0 1px rgba(255,255,255,0.75)"></div>
<svg style="position:absolute;left:195px;top:490px;" width="17" height="17" viewBox="0 0 17 17"><rect x="2.5" y="0.5" width="10.5" height="12.5" fill="#eef2fb" stroke="#8ea2d8" stroke-width="1"/><path d="M6.2 15.8 L14.3 7.2 L16.3 9.2 L8.2 17.6Z" fill="#f0a532" stroke="#9a6410" stroke-width="0.6"/><path d="M6.2 15.8 L8.2 17.6 L5.2 18Z" fill="#1d1d40"/></svg>
<div class="t" style="left:214px;top:493px;font-size:12.6px;color:#1e1d33;letter-spacing:0.1px;">Bearbeiten</div>
<div style="left:284px;top:487px;width:101px;height:23px;background:linear-gradient(#f1f1f4,#e5e6ea);border:1px solid #b4b5bd;border-radius:3px;box-sizing:border-box;box-shadow:inset 0 0 0 1px rgba(255,255,255,0.75)"></div>
<svg style="position:absolute;left:288px;top:490px;" width="17" height="17" viewBox="0 0 17 17"><path d="M8.2 14.6 A6.1 6.1 0 1 1 14.2 9.4" stroke="#4b9a1e" stroke-width="3.4" fill="none"/><path d="M8.2 14.6 A6.1 6.1 0 1 1 14.2 9.4" stroke="#a8dd5a" stroke-width="1.4" fill="none"/><path d="M10.8 9.2 H17 L13.9 14.2Z" fill="#56a824"/></svg>
<div class="t" style="left:307px;top:493px;font-size:12.6px;color:#1e1d33;letter-spacing:0.1px;">Aktualisieren</div>
<div style="left:389px;top:487px;width:126px;height:23px;background:linear-gradient(#eef1f7,#dfe5ef);border:1px solid #a9b3c6;border-radius:3px;box-sizing:border-box;box-shadow:inset 0 0 0 1px rgba(255,255,255,0.75)"></div>
<svg style="position:absolute;left:393px;top:490px;" width="17" height="17" viewBox="0 0 17 17"><rect x="0.5" y="2.5" width="15" height="12" fill="#e6eefc" stroke="#6e6e6e" stroke-width="1"/><rect x="1" y="3" width="14" height="3" fill="#8fb4e6"/><path d="M5.5 2.5 V14.5 M10.5 2.5 V10 M0.5 6.5 H15.5 M0.5 10.5 H7" stroke="#6e6e6e" stroke-width="1"/><path d="M8.6 9.2 A2.6 2.6 0 0 0 12.4 12.6 L15.8 16 L17 14.8 L13.6 11.4 A2.6 2.6 0 0 0 10.6 7.8 L12 9.4 L11.2 10.6 L9.8 10.2Z" fill="#3c7ab8"/></svg>
<div class="t" style="left:412px;top:493px;font-size:12.6px;color:#1e1d33;letter-spacing:0.1px;">Voraussetzungen</div>
<div style="left:5px;top:518px;width:1713px;height:441px;border:1px solid #c3c4cb;border-radius:3px 3px 2px 2px;box-sizing:border-box;background:#ebecef"></div>
<div style="left:6px;top:519px;width:1711px;height:21px;background:linear-gradient(#e9eaee,#e2e3e7);border-radius:2px 2px 0 0;box-shadow:inset 0 1px 0 rgba(255,255,255,0.55)"></div>
<svg style="position:absolute;left:1703px;top:527px;" width="9" height="6" viewBox="0 0 9 6"><path d="M1.2 5 L4.3 1.6 L7.4 5" stroke="#6f707c" stroke-width="1.7" fill="none"/></svg>
<div style="left:8px;top:542px;width:847px;height:414px;border:1px solid #c3c4cb;border-radius:3px 3px 2px 2px;box-sizing:border-box;background:#ebecef"></div>
<div style="left:9px;top:543px;width:845px;height:21px;background:linear-gradient(#e9eaee,#e2e3e7);border-radius:2px 2px 0 0;box-shadow:inset 0 1px 0 rgba(255,255,255,0.55)"></div>
<div class="t" style="left:20px;top:548px;font-size:12.6px;color:#1e1d33;letter-spacing:0.1px;">Ausbildungstypen</div>
<div style="left:11px;top:566px;width:841px;height:362px;border:1px solid #9c9ea9;box-sizing:border-box;background:#fff"></div>
<div style="left:12px;top:567px;width:839px;height:22px;background:linear-gradient(#f7f7f9,#f0f1f3)"></div>
<div style="left:12px;top:589px;width:839px;height:1px;background:#d6d7dc"></div>
<div style="left:290px;top:567px;width:1px;height:22px;background:#d6d7dc"></div>
<div style="left:569px;top:567px;width:1px;height:22px;background:#d6d7dc"></div>
<div class="t" style="left:16px;top:572px;font-size:12.6px;color:#1e1d33;letter-spacing:0.1px;">Kürzel</div>
<div class="t" style="left:295px;top:572px;font-size:12.6px;color:#1e1d33;letter-spacing:0.1px;">Bezeichnung</div>
<div class="t" style="left:574px;top:572px;font-size:12.6px;color:#1e1d33;letter-spacing:0.1px;">Systemeintrag</div>
<svg style="position:absolute;left:278px;top:575px;" width="8" height="5" viewBox="0 0 8 5"><path d="M0 4.5 L3.75 0.5 L7.5 4.5Z" fill="#22223a"/></svg>
<div style="left:12px;top:590px;width:839px;height:18px;background:#eeeff2"></div>
<div style="left:290px;top:590px;width:1px;height:18px;background:#d6d7dc"></div>
<div style="left:569px;top:590px;width:1px;height:18px;background:#d6d7dc"></div>
<div style="left:12px;top:608px;width:839px;height:1px;background:#d6d7dc"></div>
<div class="t" style="left:16px;top:594px;font-size:12.6px;color:#1e1d33;letter-spacing:0.1px;">Ber</div>
<div class="t" style="left:295px;top:594px;font-size:12.6px;color:#1e1d33;letter-spacing:0.1px;">Beruf</div>
<div style="left:12px;top:609px;width:839px;height:18px;background:#f0f3f8"></div>
<div style="left:290px;top:609px;width:1px;height:18px;background:#d6d7dc"></div>
<div style="left:569px;top:609px;width:1px;height:18px;background:#d6d7dc"></div>
<div style="left:12px;top:627px;width:839px;height:1px;background:#d6d7dc"></div>
<div class="t" style="left:16px;top:613px;font-size:12.6px;color:#1e1d33;letter-spacing:0.1px;">FAHREN</div>
<div class="t" style="left:295px;top:613px;font-size:12.6px;color:#1e1d33;letter-spacing:0.1px;">Führerschein</div>
<div style="left:12px;top:628px;width:839px;height:18px;background:#f6f4fc"></div>
<div style="left:290px;top:628px;width:1px;height:18px;background:#d6d7dc"></div>
<div style="left:569px;top:628px;width:1px;height:18px;background:#d6d7dc"></div>
<div style="left:12px;top:646px;width:839px;height:1px;background:#d6d7dc"></div>
<div class="t" style="left:16px;top:632px;font-size:12.6px;color:#1e1d33;letter-spacing:0.1px;">FB</div>
<div class="t" style="left:295px;top:632px;font-size:12.6px;color:#1e1d33;letter-spacing:0.1px;">Fortbildung</div>
<div style="left:12px;top:647px;width:839px;height:18px;background:#f0f3f8"></div>
<div style="left:290px;top:647px;width:1px;height:18px;background:#d6d7dc"></div>
<div style="left:569px;top:647px;width:1px;height:18px;background:#d6d7dc"></div>
<div style="left:12px;top:665px;width:839px;height:1px;background:#d6d7dc"></div>
<div class="t" style="left:16px;top:651px;font-size:12.6px;color:#1e1d33;letter-spacing:0.1px;">HI</div>
<div class="t" style="left:295px;top:651px;font-size:12.6px;color:#1e1d33;letter-spacing:0.1px;">Hausinterne Schulung</div>
<div style="left:12px;top:666px;width:839px;height:18px;background:#f6f4fc"></div>
<div style="left:290px;top:666px;width:1px;height:18px;background:#d6d7dc"></div>
<div style="left:569px;top:666px;width:1px;height:18px;background:#d6d7dc"></div>
<div style="left:12px;top:684px;width:839px;height:1px;background:#d6d7dc"></div>
<div class="t" style="left:16px;top:670px;font-size:12.6px;color:#1e1d33;letter-spacing:0.1px;">LG</div>
<div class="t" style="left:295px;top:670px;font-size:12.6px;color:#1e1d33;letter-spacing:0.1px;">Lehrgang</div>
<div style="left:12px;top:685px;width:839px;height:18px;background:#f0f3f8"></div>
<div style="left:290px;top:685px;width:1px;height:18px;background:#d6d7dc"></div>
<div style="left:569px;top:685px;width:1px;height:18px;background:#d6d7dc"></div>
<div style="left:12px;top:703px;width:839px;height:1px;background:#d6d7dc"></div>
<div class="t" style="left:16px;top:689px;font-size:12.6px;color:#1e1d33;letter-spacing:0.1px;">Sem</div>
<div class="t" style="left:295px;top:689px;font-size:12.6px;color:#1e1d33;letter-spacing:0.1px;">Seminar</div>
<div style="left:12px;top:929px;width:91px;height:23px;background:linear-gradient(#f1f1f4,#e5e6ea);border:1px solid #b4b5bd;border-radius:3px;box-sizing:border-box;box-shadow:inset 0 0 0 1px rgba(255,255,255,0.75)"></div>
<svg style="position:absolute;left:16px;top:932px;" width="16" height="16" viewBox="0 0 16 16"><defs><linearGradient id="gp" x1="0" y1="0" x2="0" y2="1"><stop offset="0" stop-color="#cfe6fa"/><stop offset="0.55" stop-color="#8cc0ec"/><stop offset="1" stop-color="#4d93d6"/></linearGradient></defs><circle cx="8" cy="8" r="7.4" fill="url(#gp)" stroke="#3b6fb6" stroke-width="1"/><path d="M6.2 3.4 H9.8 V6.2 H12.6 V9.8 H9.8 V12.6 H6.2 V9.8 H3.4 V6.2 H6.2Z" fill="#fff" stroke="#2f5fa5" stroke-width="0.9"/></svg>
<div class="t" style="left:35px;top:935px;font-size:12.6px;color:#1e1d33;letter-spacing:0.1px;">Hinzufügen</div>
<div style="left:107px;top:929px;width:83px;height:23px;background:linear-gradient(#f1f1f4,#e5e6ea);border:1px solid #b4b5bd;border-radius:3px;box-sizing:border-box;box-shadow:inset 0 0 0 1px rgba(255,255,255,0.75)"></div>
<svg style="position:absolute;left:111px;top:932px;" width="16" height="16" viewBox="0 0 16 16"><circle cx="8" cy="8" r="7.4" fill="url(#gp)" stroke="#3b6fb6" stroke-width="1"/><rect x="3.6" y="6.4" width="8.8" height="3.2" fill="#fff" stroke="#2f5fa5" stroke-width="0.9"/></svg>
<div class="t" style="left:130px;top:935px;font-size:12.6px;color:#1e1d33;letter-spacing:0.1px;">Entfernen</div>
<div style="left:194px;top:929px;width:89px;height:23px;background:linear-gradient(#f1f1f4,#e5e6ea);border:1px solid #b4b5bd;border-radius:3px;box-sizing:border-box;box-shadow:inset 0 0 0 1px rgba(255,255,255,0.75)"></div>
<svg style="position:absolute;left:198px;top:932px;" width="17" height="17" viewBox="0 0 17 17"><rect x="2.5" y="0.5" width="10.5" height="12.5" fill="#eef2fb" stroke="#8ea2d8" stroke-width="1"/><path d="M6.2 15.8 L14.3 7.2 L16.3 9.2 L8.2 17.6Z" fill="#f0a532" stroke="#9a6410" stroke-width="0.6"/><path d="M6.2 15.8 L8.2 17.6 L5.2 18Z" fill="#1d1d40"/></svg>
<div class="t" style="left:217px;top:935px;font-size:12.6px;color:#1e1d33;letter-spacing:0.1px;">Bearbeiten</div>
<div style="left:287px;top:929px;width:101px;height:23px;background:linear-gradient(#f1f1f4,#e5e6ea);border:1px solid #b4b5bd;border-radius:3px;box-sizing:border-box;box-shadow:inset 0 0 0 1px rgba(255,255,255,0.75)"></div>
<svg style="position:absolute;left:291px;top:932px;" width="17" height="17" viewBox="0 0 17 17"><path d="M8.2 14.6 A6.1 6.1 0 1 1 14.2 9.4" stroke="#4b9a1e" stroke-width="3.4" fill="none"/><path d="M8.2 14.6 A6.1 6.1 0 1 1 14.2 9.4" stroke="#a8dd5a" stroke-width="1.4" fill="none"/><path d="M10.8 9.2 H17 L13.9 14.2Z" fill="#56a824"/></svg>
<div class="t" style="left:310px;top:935px;font-size:12.6px;color:#1e1d33;letter-spacing:0.1px;">Aktualisieren</div>
<div style="left:864px;top:542px;width:851px;height:414px;border:1px solid #c3c4cb;border-radius:3px 3px 2px 2px;box-sizing:border-box;background:#ebecef"></div>
<div style="left:865px;top:543px;width:849px;height:21px;background:linear-gradient(#e9eaee,#e2e3e7);border-radius:2px 2px 0 0;box-shadow:inset 0 1px 0 rgba(255,255,255,0.55)"></div>
<div style="left:867px;top:566px;width:845px;height:362px;border:1px solid #9c9ea9;box-sizing:border-box;background:#fff"></div>
<div style="left:868px;top:567px;width:843px;height:22px;background:linear-gradient(#f7f7f9,#f0f1f3)"></div>
<div style="left:868px;top:589px;width:843px;height:1px;background:#d6d7dc"></div>
<div style="left:868px;top:590px;width:843px;height:18px;background:#eeeff2"></div>
<div style="left:868px;top:608px;width:843px;height:1px;background:#d6d7dc"></div>
<div style="left:868px;top:609px;width:843px;height:18px;background:#f0f3f8"></div>
<div style="left:868px;top:627px;width:843px;height:1px;background:#d6d7dc"></div>
<div style="left:868px;top:929px;width:91px;height:23px;background:linear-gradient(#f1f1f4,#e5e6ea);border:1px solid #b4b5bd;border-radius:3px;box-sizing:border-box;box-shadow:inset 0 0 0 1px rgba(255,255,255,0.75)"></div>
<svg style="position:absolute;left:872px;top:932px;" width="16" height="16" viewBox="0 0 16 16"><defs><linearGradient id="gp" x1="0" y1="0" x2="0" y2="1"><stop offset="0" stop-color="#cfe6fa"/><stop offset="0.55" stop-color="#8cc0ec"/><stop offset="1" stop-color="#4d93d6"/></linearGradient></defs><circle cx="8" cy="8" r="7.4" fill="url(#gp)" stroke="#3b6fb6" stroke-width="1"/><path d="M6.2 3.4 H9.8 V6.2 H12.6 V9.8 H9.8 V12.6 H6.2 V9.8 H3.4 V6.2 H6.2Z" fill="#fff" stroke="#2f5fa5" stroke-width="0.9"/></svg>
<div class="t" style="left:891px;top:935px;font-size:12.6px;color:#1e1d33;letter-spacing:0.1px;">Hinzufügen</div>
<div style="left:963px;top:929px;width:83px;height:23px;background:linear-gradient(#f1f1f4,#e5e6ea);border:1px solid #b4b5bd;border-radius:3px;box-sizing:border-box;box-shadow:inset 0 0 0 1px rgba(255,255,255,0.75)"></div>
<svg style="position:absolute;left:967px;top:932px;" width="16" height="16" viewBox="0 0 16 16"><circle cx="8" cy="8" r="7.4" fill="url(#gp)" stroke="#3b6fb6" stroke-width="1"/><rect x="3.6" y="6.4" width="8.8" height="3.2" fill="#fff" stroke="#2f5fa5" stroke-width="0.9"/></svg>
<div class="t" style="left:986px;top:935px;font-size:12.6px;color:#1e1d33;letter-spacing:0.1px;">Entfernen</div>
<div style="left:1050px;top:929px;width:89px;height:23px;background:linear-gradient(#f1f1f4,#e5e6ea);border:1px solid #b4b5bd;border-radius:3px;box-sizing:border-box;box-shadow:inset 0 0 0 1px rgba(255,255,255,0.75)"></div>
<svg style="position:absolute;left:1054px;top:932px;" width="17" height="17" viewBox="0 0 17 17"><rect x="2.5" y="0.5" width="10.5" height="12.5" fill="#eef2fb" stroke="#8ea2d8" stroke-width="1"/><path d="M6.2 15.8 L14.3 7.2 L16.3 9.2 L8.2 17.6Z" fill="#f0a532" stroke="#9a6410" stroke-width="0.6"/><path d="M6.2 15.8 L8.2 17.6 L5.2 18Z" fill="#1d1d40"/></svg>
<div class="t" style="left:1073px;top:935px;font-size:12.6px;color:#1e1d33;letter-spacing:0.1px;">Bearbeiten</div>
<div style="left:1143px;top:929px;width:101px;height:23px;background:linear-gradient(#f1f1f4,#e5e6ea);border:1px solid #b4b5bd;border-radius:3px;box-sizing:border-box;box-shadow:inset 0 0 0 1px rgba(255,255,255,0.75)"></div>
<svg style="position:absolute;left:1147px;top:932px;" width="17" height="17" viewBox="0 0 17 17"><path d="M8.2 14.6 A6.1 6.1 0 1 1 14.2 9.4" stroke="#4b9a1e" stroke-width="3.4" fill="none"/><path d="M8.2 14.6 A6.1 6.1 0 1 1 14.2 9.4" stroke="#a8dd5a" stroke-width="1.4" fill="none"/><path d="M10.8 9.2 H17 L13.9 14.2Z" fill="#56a824"/></svg>
<div class="t" style="left:1166px;top:935px;font-size:12.6px;color:#1e1d33;letter-spacing:0.1px;">Aktualisieren</div>
<div style="left:0px;top:962px;width:1721px;height:2px;background:#dadbe0"></div>
<div style="left:0px;top:964px;width:1721px;height:1px;background:#a3a5af"></div>
<div style="left:0px;top:965px;width:1721px;height:2px;background:#f2f2f5"></div>
<div style="left:0px;top:967px;width:1721px;height:1px;background:#c8c9cf"></div>
<div style="left:679px;top:255px;width:807px;height:559px;background:#ebecef;border:1px solid #737373;box-sizing:border-box;box-shadow:0 4px 16px rgba(0,0,0,0.30)"></div>
<div style="left:680px;top:256px;width:805px;height:30px;background:#fff"></div>
<div class="t" style="left:688px;top:265px;font-size:12px;color:#1a1a1a;letter-spacing:-0.252px;">Voraussetzungen für den Kurs &#x27;Fahrerlaubnis Klasse 3&#x27;</div>
<svg style="position:absolute;left:1464px;top:264px;" width="12" height="12" viewBox="0 0 12 12"><path d="M0.8 0.8 L11.2 11.2 M11.2 0.8 L0.8 11.2" stroke="#222" stroke-width="1.3"/></svg>
<div style="left:692px;top:298px;width:781px;height:174px;border:1px solid #c3c4cb;border-radius:3px 3px 2px 2px;box-sizing:border-box;background:#ebecef"></div>
<div style="left:693px;top:299px;width:779px;height:24px;background:linear-gradient(#e9eaee,#e2e3e7);border-radius:2px 2px 0 0;box-shadow:inset 0 1px 0 rgba(255,255,255,0.55)"></div>
<svg style="position:absolute;left:1458px;top:307px;" width="9" height="6" viewBox="0 0 9 6"><path d="M1.2 5 L4.3 1.6 L7.4 5" stroke="#6f707c" stroke-width="1.7" fill="none"/></svg>
<svg style="position:absolute;left:705px;top:302px;" width="16" height="16" viewBox="0 0 16 16"><circle cx="8" cy="8" r="7.8" fill="#4a7fbd"/><rect x="6.9" y="7.2" width="2.2" height="5" fill="#fff"/><rect x="6.9" y="4.2" width="2.2" height="2" fill="#fff"/></svg>
<div class="t" style="left:726px;top:305px;font-size:12.6px;color:#1e1d33;letter-spacing:0.1px;">Info</div>
<div class="t" style="left:695px;top:328px;font-size:12.6px;color:#1e1d33;letter-spacing:0.102px;">In diesem Formular können Sie Ausbildungen auswählen, die Voraussetzungen / Bedingungen für die Ausbildung &quot;Fahrerlaubnis Klasse</div>
<div class="t" style="left:695px;top:344px;font-size:12.6px;color:#1e1d33;letter-spacing:0.124px;">3&quot; darstellen.</div>
<div class="t" style="left:695px;top:376px;font-size:12.6px;color:#1e1d33;letter-spacing:0.109px;">Dabei werden mehrere Ausbildungen zu Voraussetzungsgruppen zusammengefasst. Innerhalb dieser Gruppe sind die Ausbildungen</div>
<div class="t" style="left:695px;top:392px;font-size:12.6px;color:#1e1d33;letter-spacing:0.001px;">&quot;UND-verknüpft&quot;.</div>
<div class="t" style="left:695px;top:408px;font-size:12.6px;color:#1e1d33;letter-spacing:0.099px;">Die Voraussetzungsgruppen untereinander sind &quot;ODER-verknüpft&quot;. Wenn Sie in zwei Voraussetzungsgruppen jeweils eine Ausbildung</div>
<div class="t" style="left:695px;top:424px;font-size:12.6px;color:#1e1d33;letter-spacing:0.111px;">verschieben, dann ist die</div>
<div class="t" style="left:695px;top:440px;font-size:12.6px;color:#1e1d33;letter-spacing:0.122px;">Bedingung für &quot;Fahrerlaubnis Klasse 3&quot; entweder die Ausbildung aus der Voraussetzungsgruppe 1 oder die Ausbildung aus der</div>
<div class="t" style="left:695px;top:456px;font-size:12.6px;color:#1e1d33;letter-spacing:0.075px;">Voraussetzungsgruppe 2.</div>
<div style="left:692px;top:476px;width:262px;height:271px;border:1px solid #c3c4cb;border-radius:3px 3px 2px 2px;box-sizing:border-box;background:#ebecef"></div>
<div style="left:693px;top:477px;width:260px;height:21px;background:linear-gradient(#e9eaee,#e2e3e7);border-radius:2px 2px 0 0;box-shadow:inset 0 1px 0 rgba(255,255,255,0.55)"></div>
<div class="t" style="left:704px;top:482px;font-size:12.6px;color:#1e1d33;letter-spacing:0.1px;">Gruppen</div>
<div style="left:695px;top:500px;width:256px;height:215px;border:1px solid #9c9ea9;box-sizing:border-box;background:#fff"></div>
<div style="left:696px;top:501px;width:254px;height:22px;background:linear-gradient(#f7f7f9,#f0f1f3)"></div>
<div style="left:696px;top:523px;width:254px;height:1px;background:#d6d7dc"></div>
<div class="t" style="left:700px;top:506px;font-size:12.6px;color:#1e1d33;letter-spacing:0.1px;">Name</div>
<div class="t" style="left:700px;top:528px;font-size:12.6px;color:#1e1d33;letter-spacing:0.1px;">GAL Ausbildung 3</div>
<div style="left:696px;top:542px;width:254px;height:1px;background:#d6d7dc"></div>
<div style="left:696px;top:720px;width:23px;height:23px;background:linear-gradient(#f1f1f4,#e5e6ea);border:1px solid #b4b5bd;border-radius:3px;box-sizing:border-box;box-shadow:inset 0 0 0 1px rgba(255,255,255,0.75)"></div>
<svg style="position:absolute;left:700px;top:723px;" width="16" height="16" viewBox="0 0 16 16"><defs><linearGradient id="gp" x1="0" y1="0" x2="0" y2="1"><stop offset="0" stop-color="#cfe6fa"/><stop offset="0.55" stop-color="#8cc0ec"/><stop offset="1" stop-color="#4d93d6"/></linearGradient></defs><circle cx="8" cy="8" r="7.4" fill="url(#gp)" stroke="#3b6fb6" stroke-width="1"/><path d="M6.2 3.4 H9.8 V6.2 H12.6 V9.8 H9.8 V12.6 H6.2 V9.8 H3.4 V6.2 H6.2Z" fill="#fff" stroke="#2f5fa5" stroke-width="0.9"/></svg>
<div style="left:723px;top:720px;width:23px;height:23px;background:linear-gradient(#f1f1f4,#e5e6ea);border:1px solid #b4b5bd;border-radius:3px;box-sizing:border-box;box-shadow:inset 0 0 0 1px rgba(255,255,255,0.75)"></div>
<svg style="position:absolute;left:727px;top:723px;" width="16" height="16" viewBox="0 0 16 16"><circle cx="8" cy="8" r="7.4" fill="url(#gp)" stroke="#3b6fb6" stroke-width="1"/><rect x="3.6" y="6.4" width="8.8" height="3.2" fill="#fff" stroke="#2f5fa5" stroke-width="0.9"/></svg>
<div style="left:750px;top:720px;width:23px;height:23px;background:linear-gradient(#f1f1f4,#e5e6ea);border:1px solid #b4b5bd;border-radius:3px;box-sizing:border-box;box-shadow:inset 0 0 0 1px rgba(255,255,255,0.75)"></div>
<svg style="position:absolute;left:754px;top:723px;" width="17" height="17" viewBox="0 0 17 17"><rect x="2.5" y="0.5" width="10.5" height="12.5" fill="#eef2fb" stroke="#8ea2d8" stroke-width="1"/><path d="M6.2 15.8 L14.3 7.2 L16.3 9.2 L8.2 17.6Z" fill="#f0a532" stroke="#9a6410" stroke-width="0.6"/><path d="M6.2 15.8 L8.2 17.6 L5.2 18Z" fill="#1d1d40"/></svg>
<div style="left:957px;top:605.0px;width:3px;height:1px;background:#8d8e99"></div>
<div style="left:957px;top:607.5px;width:3px;height:1px;background:#8d8e99"></div>
<div style="left:957px;top:610.0px;width:3px;height:1px;background:#8d8e99"></div>
<div style="left:957px;top:612.5px;width:3px;height:1px;background:#8d8e99"></div>
<div style="left:957px;top:615.0px;width:3px;height:1px;background:#8d8e99"></div>
<div style="left:957px;top:617.5px;width:3px;height:1px;background:#8d8e99"></div>
<div style="left:963px;top:476px;width:510px;height:271px;border:1px solid #c3c4cb;border-radius:3px 3px 2px 2px;box-sizing:border-box;background:#ebecef"></div>
<div style="left:964px;top:477px;width:508px;height:21px;background:linear-gradient(#e9eaee,#e2e3e7);border-radius:2px 2px 0 0;box-shadow:inset 0 1px 0 rgba(255,255,255,0.55)"></div>
<div class="t" style="left:975px;top:482px;font-size:12.6px;color:#1e1d33;letter-spacing:0.1px;">Voraussetzungen</div>
<div style="left:966px;top:500px;width:504px;height:215px;border:1px solid #9c9ea9;box-sizing:border-box;background:#fff"></div>
<div style="left:967px;top:501px;width:502px;height:22px;background:linear-gradient(#f7f7f9,#f0f1f3)"></div>
<div style="left:967px;top:523px;width:502px;height:1px;background:#d6d7dc"></div>
<div style="left:1028px;top:501px;width:1px;height:22px;background:#d6d7dc"></div>
<div style="left:1230px;top:501px;width:1px;height:22px;background:#d6d7dc"></div>
<div style="left:1338px;top:501px;width:1px;height:22px;background:#d6d7dc"></div>
<div style="left:1452px;top:501px;width:1px;height:22px;background:#d6d7dc"></div>
<div class="t" style="left:971px;top:506px;font-size:12.6px;color:#1e1d33;letter-spacing:0.1px;">Kursnr.</div>
<div class="t" style="left:1033px;top:506px;font-size:12.6px;color:#1e1d33;letter-spacing:0.1px;">Name</div>
<div class="t" style="left:1235px;top:506px;font-size:12.6px;color:#1e1d33;letter-spacing:0.1px;">Kürzel</div>
<div class="t" style="left:1343px;top:506px;font-size:12.6px;color:#1e1d33;letter-spacing:0.1px;">Gewählt</div>
<svg style="position:absolute;left:1440px;top:510px;" width="8" height="5" viewBox="0 0 8 5"><path d="M0 0.5 H7.5 L3.75 4.5Z" fill="#22223a"/></svg>
<div style="left:1452px;top:524px;width:17px;height:190px;background:#f5f5f7"></div>
<svg style="position:absolute;left:1457px;top:530px;" width="8" height="5" viewBox="0 0 8 5"><path d="M0 4.5 L3.75 0.5 L7.5 4.5Z" fill="#7d7e8a"/></svg>
<div style="left:1457px;top:541px;width:7px;height:17px;border:1px solid #9fa0ab;border-radius:4px;box-sizing:border-box;background:linear-gradient(90deg,#e6e7ec,#d8d9df)"></div>
<svg style="position:absolute;left:1457px;top:703px;" width="8" height="5" viewBox="0 0 8 5"><path d="M0 0.5 H7.5 L3.75 4.5Z" fill="#7d7e8a"/></svg>
<div style="left:967px;top:524px;width:20px;height:190px;background:#f8f8f9"></div>
<div style="left:967px;top:524px;width:485px;height:18px;background:#f8f8f9"></div>
<svg style="position:absolute;left:974px;top:532px;" width="7" height="4" viewBox="0 0 7 4"><path d="M0 0 H7 L3.5 4Z" fill="#7c7d88"/></svg>
<div class="t" style="left:990px;top:528px;font-size:12.6px;color:#7c7d88;font-weight:bold;letter-spacing:0.766px;">Gewählt: gewählt (Anzahl=2)</div>
<div style="left:987px;top:542px;width:465px;height:1px;background:#d6d7dc"></div>
<div style="left:987px;top:543px;width:465px;height:18px;background:#f6f4fc"></div>
<div style="left:986px;top:543px;width:1px;height:19px;background:#d6d7dc"></div>
<div style="left:1028px;top:543px;width:1px;height:18px;background:#d6d7dc"></div>
<div style="left:1230px;top:543px;width:1px;height:18px;background:#d6d7dc"></div>
<div style="left:1338px;top:543px;width:1px;height:18px;background:#d6d7dc"></div>
<div class="t" style="left:992px;top:547px;font-size:12.6px;color:#1e1d33;letter-spacing:0.1px;">gal</div>
<div class="t" style="left:1033px;top:547px;font-size:12.6px;color:#1e1d33;letter-spacing:0.1px;">Grundausbildungslehrgang</div>
<div class="t" style="left:1235px;top:547px;font-size:12.6px;color:#1e1d33;letter-spacing:0.1px;">GAL</div>
<div style="left:1389px;top:545px;width:13px;height:13px;border:1px solid #9b9ca7;box-sizing:border-box;background:#fff;box-shadow:inset 0 0 0 2px #dddee3"></div>
<svg style="position:absolute;left:1389px;top:543px;" width="15" height="15" viewBox="0 0 15 15"><path d="M1.6 8.3 L5.2 13.3 L13.6 1" stroke="#23223a" stroke-width="2.1" fill="none"/></svg>
<div style="left:987px;top:561px;width:465px;height:1px;background:#d6d7dc"></div>
<div style="left:987px;top:562px;width:465px;height:18px;background:#f0f3f8"></div>
<div style="left:986px;top:562px;width:1px;height:19px;background:#d6d7dc"></div>
<div style="left:1028px;top:562px;width:1px;height:18px;background:#d6d7dc"></div>
<div style="left:1230px;top:562px;width:1px;height:18px;background:#d6d7dc"></div>
<div style="left:1338px;top:562px;width:1px;height:18px;background:#d6d7dc"></div>
<div class="t" style="left:1033px;top:566px;font-size:12.6px;color:#1e1d33;letter-spacing:0.1px;">Grundausbildungslehrgang-2</div>
<div class="t" style="left:1235px;top:566px;font-size:12.6px;color:#1e1d33;letter-spacing:0.1px;">GAL</div>
<div style="left:1389px;top:564px;width:13px;height:13px;border:1px solid #9b9ca7;box-sizing:border-box;background:#fff;box-shadow:inset 0 0 0 2px #dddee3"></div>
<svg style="position:absolute;left:1389px;top:562px;" width="15" height="15" viewBox="0 0 15 15"><path d="M1.6 8.3 L5.2 13.3 L13.6 1" stroke="#23223a" stroke-width="2.1" fill="none"/></svg>
<div style="left:967px;top:580px;width:485px;height:1px;background:#d6d7dc"></div>
<div style="left:967px;top:581px;width:485px;height:18px;background:#f8f8f9"></div>
<svg style="position:absolute;left:974px;top:589px;" width="7" height="4" viewBox="0 0 7 4"><path d="M0 0 H7 L3.5 4Z" fill="#7c7d88"/></svg>
<div class="t" style="left:990px;top:585px;font-size:12.6px;color:#7c7d88;font-weight:bold;letter-spacing:0.715px;">Gewählt: nicht gewählt (Anzahl=135)</div>
<div style="left:987px;top:599px;width:465px;height:1px;background:#d6d7dc"></div>
<div style="left:987px;top:600px;width:465px;height:18px;background:#f0f3f8"></div>
<div style="left:986px;top:600px;width:1px;height:19px;background:#d6d7dc"></div>
<div style="left:1028px;top:600px;width:1px;height:18px;background:#d6d7dc"></div>
<div style="left:1230px;top:600px;width:1px;height:18px;background:#d6d7dc"></div>
<div style="left:1338px;top:600px;width:1px;height:18px;background:#d6d7dc"></div>
<div class="t" style="left:992px;top:604px;font-size:12.6px;color:#1e1d33;letter-spacing:0.1px;">2</div>
<div class="t" style="left:1033px;top:604px;font-size:12.6px;color:#1e1d33;letter-spacing:0.1px;">Rettungsdienstfortbildung</div>
<div class="t" style="left:1235px;top:604px;font-size:12.6px;color:#1e1d33;letter-spacing:0.1px;">RDF</div>
<div style="left:1389px;top:602px;width:13px;height:13px;border:1px solid #9b9ca7;box-sizing:border-box;background:#fff;box-shadow:inset 0 0 0 2px #dddee3"></div>
<div style="left:987px;top:618px;width:465px;height:1px;background:#d6d7dc"></div>
<div style="left:987px;top:619px;width:465px;height:18px;background:#f6f4fc"></div>
<div style="left:986px;top:619px;width:1px;height:19px;background:#d6d7dc"></div>
<div style="left:1028px;top:619px;width:1px;height:18px;background:#d6d7dc"></div>
<div style="left:1230px;top:619px;width:1px;height:18px;background:#d6d7dc"></div>
<div style="left:1338px;top:619px;width:1px;height:18px;background:#d6d7dc"></div>
<div class="t" style="left:992px;top:623px;font-size:12.6px;color:#1e1d33;letter-spacing:0.1px;">12</div>
<div class="t" style="left:1033px;top:623px;font-size:12.6px;color:#1e1d33;letter-spacing:0.1px;">Notfallsanitäter</div>
<div class="t" style="left:1235px;top:623px;font-size:12.6px;color:#1e1d33;letter-spacing:0.1px;">NFS</div>
<div style="left:1389px;top:621px;width:13px;height:13px;border:1px solid #9b9ca7;box-sizing:border-box;background:#fff;box-shadow:inset 0 0 0 2px #dddee3"></div>
<div style="left:987px;top:637px;width:465px;height:1px;background:#d6d7dc"></div>
<div style="left:987px;top:638px;width:465px;height:18px;background:#f0f3f8"></div>
<div style="left:986px;top:638px;width:1px;height:19px;background:#d6d7dc"></div>
<div style="left:1028px;top:638px;width:1px;height:18px;background:#d6d7dc"></div>
<div style="left:1230px;top:638px;width:1px;height:18px;background:#d6d7dc"></div>
<div style="left:1338px;top:638px;width:1px;height:18px;background:#d6d7dc"></div>
<div class="t" style="left:992px;top:642px;font-size:12.6px;color:#1e1d33;letter-spacing:0.1px;">CSA</div>
<div class="t" style="left:1033px;top:642px;font-size:12.6px;color:#1e1d33;letter-spacing:0.1px;">Chemikalienschutzanzugträger (...</div>
<div class="t" style="left:1235px;top:642px;font-size:12.6px;color:#1e1d33;letter-spacing:0.1px;">CSA</div>
<div style="left:1389px;top:640px;width:13px;height:13px;border:1px solid #9b9ca7;box-sizing:border-box;background:#fff;box-shadow:inset 0 0 0 2px #dddee3"></div>
<div style="left:987px;top:656px;width:465px;height:1px;background:#d6d7dc"></div>
<div style="left:987px;top:657px;width:465px;height:18px;background:#f6f4fc"></div>
<div style="left:986px;top:657px;width:1px;height:19px;background:#d6d7dc"></div>
<div style="left:1028px;top:657px;width:1px;height:18px;background:#d6d7dc"></div>
<div style="left:1230px;top:657px;width:1px;height:18px;background:#d6d7dc"></div>
<div style="left:1338px;top:657px;width:1px;height:18px;background:#d6d7dc"></div>
<div class="t" style="left:992px;top:661px;font-size:12.6px;color:#1e1d33;letter-spacing:0.1px;">CSA</div>
<div class="t" style="left:1033px;top:661px;font-size:12.6px;color:#1e1d33;letter-spacing:0.1px;">Chemikalienschutzanzugträger (...</div>
<div class="t" style="left:1235px;top:661px;font-size:12.6px;color:#1e1d33;letter-spacing:0.1px;">CSA</div>
<div style="left:1389px;top:659px;width:13px;height:13px;border:1px solid #9b9ca7;box-sizing:border-box;background:#fff;box-shadow:inset 0 0 0 2px #dddee3"></div>
<div style="left:987px;top:675px;width:465px;height:1px;background:#d6d7dc"></div>
<div style="left:987px;top:676px;width:465px;height:18px;background:#f0f3f8"></div>
<div style="left:986px;top:676px;width:1px;height:19px;background:#d6d7dc"></div>
<div style="left:1028px;top:676px;width:1px;height:18px;background:#d6d7dc"></div>
<div style="left:1230px;top:676px;width:1px;height:18px;background:#d6d7dc"></div>
<div style="left:1338px;top:676px;width:1px;height:18px;background:#d6d7dc"></div>
<div class="t" style="left:992px;top:680px;font-size:12.6px;color:#1e1d33;letter-spacing:0.1px;">123</div>
<div class="t" style="left:1033px;top:680px;font-size:12.6px;color:#1e1d33;letter-spacing:0.1px;">Sprechfunker</div>
<div class="t" style="left:1235px;top:680px;font-size:12.6px;color:#1e1d33;letter-spacing:0.1px;">SPR</div>
<div style="left:1389px;top:678px;width:13px;height:13px;border:1px solid #9b9ca7;box-sizing:border-box;background:#fff;box-shadow:inset 0 0 0 2px #dddee3"></div>
<div style="left:987px;top:694px;width:465px;height:1px;background:#d6d7dc"></div>
<div style="left:987px;top:695px;width:465px;height:18px;background:#f6f4fc"></div>
<div style="left:986px;top:695px;width:1px;height:19px;background:#d6d7dc"></div>
<div style="left:1028px;top:695px;width:1px;height:18px;background:#d6d7dc"></div>
<div style="left:1230px;top:695px;width:1px;height:18px;background:#d6d7dc"></div>
<div style="left:1338px;top:695px;width:1px;height:18px;background:#d6d7dc"></div>
<div class="t" style="left:992px;top:699px;font-size:12.6px;color:#1e1d33;letter-spacing:0.1px;">4711</div>
<div class="t" style="left:1033px;top:699px;font-size:12.6px;color:#1e1d33;letter-spacing:0.1px;">Elektriker</div>
<div class="t" style="left:1235px;top:699px;font-size:12.6px;color:#1e1d33;letter-spacing:0.1px;">ELEK</div>
<div style="left:1389px;top:697px;width:13px;height:13px;border:1px solid #9b9ca7;box-sizing:border-box;background:#fff;box-shadow:inset 0 0 0 2px #dddee3"></div>
<div style="left:987px;top:713px;width:465px;height:1px;background:#d6d7dc"></div>
<div style="left:967px;top:720px;width:101px;height:23px;background:linear-gradient(#f1f1f4,#e5e6ea);border:1px solid #b4b5bd;border-radius:3px;box-sizing:border-box;box-shadow:inset 0 0 0 1px rgba(255,255,255,0.75)"></div>
<svg style="position:absolute;left:971px;top:723px;" width="16" height="16" viewBox="0 0 16 16"><circle cx="7.5" cy="7.5" r="7" fill="#c2c3c6" stroke="#9fa0a4" stroke-width="1"/><path d="M3.8 7.6 L6.5 10.3 L11.3 5" stroke="#86878c" stroke-width="3" fill="none"/><path d="M3.8 7.6 L6.5 10.3 L11.3 5" stroke="#f2f2f2" stroke-width="1.4" fill="none"/></svg>
<div class="t" style="left:990px;top:726px;font-size:12.6px;color:#9c9da5;letter-spacing:0.1px;">Übernehmen</div>
<div style="left:1072px;top:720px;width:89px;height:23px;background:linear-gradient(#f1f1f4,#e5e6ea);border:1px solid #b4b5bd;border-radius:3px;box-sizing:border-box;box-shadow:inset 0 0 0 1px rgba(255,255,255,0.75)"></div>
<svg style="position:absolute;left:1076px;top:723px;" width="16" height="16" viewBox="0 0 16 16"><circle cx="7.5" cy="7.5" r="7" fill="#a9aaad" stroke="#8d8e92" stroke-width="1"/><path d="M4.6 4.6 L10.4 10.4 M10.4 4.6 L4.6 10.4" stroke="#e8e8ea" stroke-width="2.6"/></svg>
<div class="t" style="left:1095px;top:726px;font-size:12.6px;color:#9c9da5;letter-spacing:0.1px;">Abbrechen</div>
<div style="left:1281px;top:763px;width:192px;height:38px;background:linear-gradient(#f2f2f5,#e4e5e9);border:1px solid #a6a7b0;border-radius:3px;box-sizing:border-box"></div>
<svg style="position:absolute;left:1287px;top:769px;" width="26" height="26" viewBox="0 0 26 26"><defs><linearGradient id="rg" x1="0" y1="0" x2="0" y2="1"><stop offset="0" stop-color="#e8554a"/><stop offset="1" stop-color="#c2261b"/></linearGradient></defs><rect x="0.5" y="0.5" width="25" height="25" rx="2" fill="url(#rg)" stroke="#b02418"/><path d="M8.3 8.3 L17.7 17.7 M17.7 8.3 L8.3 17.7" stroke="#f4f6fa" stroke-width="3.6" stroke-linecap="round"/></svg>
<div class="t" style="left:1367px;top:777px;font-size:12.6px;color:#1e1d33;letter-spacing:-0.252px;">Schließen</div>
<svg style="position:absolute;left:1139px;top:272px;" width="14" height="22" viewBox="0 0 14 22"><path d="M1.5 1.5 V17.2 L5.3 13.5 L8.3 20.2 L10.8 19.1 L7.9 12.6 H12.8Z" fill="#fff" stroke="#111" stroke-width="1.05" stroke-linejoin="round"/></svg>
</body></html>
